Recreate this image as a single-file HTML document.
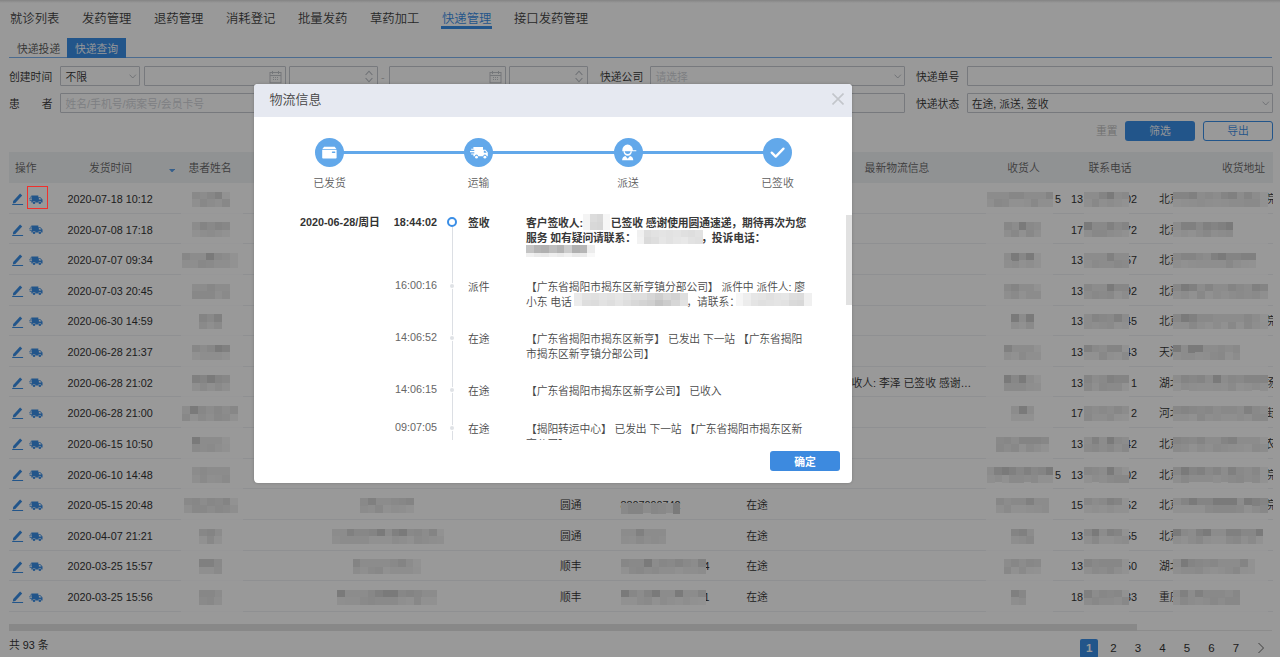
<!DOCTYPE html>
<html lang="zh-CN">
<head>
<meta charset="utf-8">
<title>快递管理</title>
<style>
*{box-sizing:border-box;margin:0;padding:0}
html,body{width:1280px;height:657px;overflow:hidden;background:#fff}
body{font-family:"Liberation Sans","Noto Sans CJK SC",sans-serif;font-size:10.8px;color:#333;position:relative;font-weight:350}
.a{position:absolute;white-space:nowrap}
.a i{position:absolute;display:block}
#page{position:absolute;left:0;top:0;width:1280px;height:657px;overflow:hidden;background:#fff}
.nav span{position:absolute;top:8.900px;font-size:12.35px;line-height:20px;color:#444;white-space:nowrap}
.nav span.on{color:#3a8ee6}
.inp{position:absolute;height:20px;padding-top:.8px;border:1px solid #c6cad0;border-radius:1px;background:#fff;font-size:10.8px;line-height:18px;padding-left:4.500px;color:#333;white-space:nowrap;overflow:hidden}
.inp.dis{background:#fff}
.ph{color:#d0d3d8}
.lbl{position:absolute;padding-top:.8px;font-size:10.8px;line-height:20px;color:#333;white-space:nowrap}
.th{position:absolute;top:153px;height:31px;line-height:31px;font-size:10.8px;color:#666;white-space:nowrap}
.row{position:absolute;left:9px;width:1264px;overflow:hidden;height:30.63px;border-bottom:1px solid #eff1f4}
.row span{position:absolute;top:.9px;line-height:31px;font-size:10.8px;color:#333;white-space:nowrap}
.row svg{position:absolute}
#mask{position:absolute;left:0;top:0;width:1280px;height:657px;background:rgba(0,0,0,.4)}
#dlg{position:absolute;left:255px;top:84px;width:597px;height:398px}
#dbg{position:absolute;left:-1.100px;top:-0.100px;width:597.900px;height:398.800px;background:#fff;border-radius:4px;overflow:hidden;box-shadow:0 0 3px rgba(0,0,0,.22)}
#dbg .hd{position:absolute;left:0;top:0;width:100%;height:32.900px;background:#e6e9f1}
.stp{position:absolute;width:29px;height:29px;border-radius:50%;background:#62a8ea;top:54px}
.stp svg{position:absolute;left:0;top:0}
.stl{position:absolute;top:92px;font-size:10.8px;line-height:14px;color:#5c5c5c;width:80px;text-align:center}
#sc{position:absolute;left:0;top:120px;width:597px;height:235.75px;overflow:hidden}
#sc span{position:absolute;font-size:10.8px;line-height:15px;color:#4a4a4a;white-space:nowrap}
#sc span.t{color:#666}
#sc span.b{font-weight:bold;color:#333}
#sc span.m{font-weight:bold;color:#383838}
#sc span.d{white-space:normal;width:283px;letter-spacing:-0.1px}
</style>
</head>
<body>
<div id="page">
<div class="nav">
<span style="left:10px">就诊列表</span>
<span style="left:82px">发药管理</span>
<span style="left:154px">退药管理</span>
<span style="left:226px">消耗登记</span>
<span style="left:298px">批量发药</span>
<span style="left:370px">草药加工</span>
<span class="on" style="left:442px">快递管理</span>
<span style="left:514px">接口发药管理</span>
<div class="a" style="left:441.300px;top:26.300px;width:50.500px;height:2.400px;background:#3a8ee6"></div>
</div>
<div class="a" style="left:0;top:0;width:1280px;height:3px;background:linear-gradient(#dcdcdc,#fff)"></div>
<div class="a" style="left:9px;top:57px;width:1263px;height:1px;background:#7db3ee"></div>
<div class="a" style="left:17px;top:39.800px;line-height:18px;color:#555">快递投递</div>
<div class="a" style="left:67px;top:38px;width:59px;height:20px;background:#3a8ee6;color:#fff;line-height:20px;padding-top:.8px;text-align:center">快递查询</div>
<div class="lbl" style="left:9px;top:66px">创建时间</div>
<div class="inp" style="left:60px;top:66px;width:80px">不限<svg class="a" style="right:2.500px;top:6.500px" width="7.500" height="5" viewBox="0 0 9 6"><path d="M0.7 0.8L4.5 4.8L8.3 0.8" fill="none" stroke="#b0b4ba" stroke-width="1"/></svg></div>
<div class="inp dis" style="left:144px;top:66px;width:142px"><svg class="a" style="right:3px;top:3.300px" width="13" height="13.500" viewBox="0 0 13 13.500"><rect x="1" y="2.5" width="11" height="10.300" fill="none" stroke="#c3c6cc"/><path d="M3.5 1v3M9.5 1v3M1 5.5h11M4 7.5h1M6 7.5h1M8 7.5h1M4 9.5h1M6 9.5h1M8 9.5h1" stroke="#c3c6cc" fill="none"/></svg></div>
<div class="inp dis" style="left:289px;top:66px;width:89px"><svg class="a" style="right:4px;top:3px" width="8" height="13" viewBox="0 0 8 13"><path d="M0.6 5L4 1.2L7.4 5M0.6 8L4 11.800L7.400 8" fill="none" stroke="#b9bdc3" stroke-width="1.100"/></svg></div>
<div class="lbl" style="left:381px;top:66px;color:#c4c4c4">-</div>
<div class="inp dis" style="left:389px;top:66px;width:117px"><svg class="a" style="right:3px;top:3.300px" width="13" height="13.500" viewBox="0 0 13 13.500"><rect x="1" y="2.5" width="11" height="10.300" fill="none" stroke="#c3c6cc"/><path d="M3.5 1v3M9.5 1v3M1 5.5h11M4 7.5h1M6 7.5h1M8 7.5h1M4 9.5h1M6 9.5h1M8 9.5h1" stroke="#c3c6cc" fill="none"/></svg></div>
<div class="inp dis" style="left:509px;top:66px;width:79px"><svg class="a" style="right:4px;top:3px" width="8" height="13" viewBox="0 0 8 13"><path d="M0.6 5L4 1.2L7.4 5M0.6 8L4 11.800L7.400 8" fill="none" stroke="#b9bdc3" stroke-width="1.100"/></svg></div>
<div class="lbl" style="left:600px;top:66px">快递公司</div>
<div class="inp" style="left:650px;top:66px;width:255px"><span class="ph">请选择</span><svg class="a" style="right:2.500px;top:6.500px" width="7.500" height="5" viewBox="0 0 9 6"><path d="M0.7 0.8L4.5 4.8L8.3 0.8" fill="none" stroke="#b0b4ba" stroke-width="1"/></svg></div>
<div class="lbl" style="left:916px;top:66px">快递单号</div>
<div class="inp" style="left:967px;top:66px;width:306px"></div>
<div class="lbl" style="left:9px;top:93px;width:44px;letter-spacing:22px">患者</div>
<div class="inp" style="left:60px;top:93px;width:480px"><span class="ph">姓名/手机号/病案号/会员卡号</span></div>
<div class="inp" style="left:650px;top:93px;width:255px"></div>
<div class="lbl" style="left:916px;top:93px">快递状态</div>
<div class="inp" style="left:967px;top:93px;width:306px;padding-left:3.700px">在途, 派送, 签收<svg class="a" style="right:2.500px;top:6.500px" width="7.500" height="5" viewBox="0 0 9 6"><path d="M0.7 0.8L4.5 4.8L8.3 0.8" fill="none" stroke="#b0b4ba" stroke-width="1"/></svg></div>
<div class="a" style="left:1096px;top:121px;line-height:20px;color:#bbb">重置</div>
<div class="a" style="left:1125px;top:121px;width:70px;height:20px;border-radius:3px;background:#3a8ee6;color:#fff;line-height:20px;text-align:center">筛选</div>
<div class="a" style="left:1203px;top:121px;width:70px;height:20px;border-radius:3px;border:1px solid #3a8ee6;color:#3a8ee6;line-height:18px;text-align:center">导出</div>
<div class="a" style="left:9px;top:152px;width:1264px;height:31px;background:#f1f3f6"></div>
<div class="th" style="left:15.0px">操作</div>
<div class="th" style="left:50.5px;width:120px;text-align:center">发货时间</div>
<svg class="a" style="left:168.800px;top:168.800px" width="6.200" height="3.600" viewBox="0 0 7 4"><path d="M0 0h7L3.500 4z" fill="#5a9fe8"/></svg>
<div class="th" style="left:150.0px;width:120px;text-align:center">患者姓名</div>
<div class="th" style="left:837.0px;width:120px;text-align:center">最新物流信息</div>
<div class="th" style="left:963.5px;width:120px;text-align:center">收货人</div>
<div class="th" style="left:1050.0px;width:120px;text-align:center">联系电话</div>
<div class="th" style="left:1183.5px;width:120px;text-align:center">收货地址</div>
<div class="row" style="top:183.00px">
<svg style="left:3px;top:10.0px" width="12" height="12.5" viewBox="0 0 12 12.500"><path d="M0.9 10.400L1.200 8L8.100 0.500L10.200 2.500L3.300 10z" fill="#3a8ee6"/><path d="M0.200 11.500h10.900" stroke="#3a8ee6" stroke-width="1"/></svg>
<svg style="left:20px;top:11.6px" width="14" height="9.6" viewBox="0 0 15 11" preserveAspectRatio="none"><path d="M2.5 0.5h7.5v2h2.2l2.3 2.6v3.4h-1.3a1.6 1.6 0 0 0-3.2 0h-3a1.6 1.6 0 0 0-3.2 0h-1.3v-1.5h-1.800v-1h2.500v-1h-3.200v-1h3.200v-1h-2.200v-1h1.500z" fill="#3a8ee6"/><circle cx="5.400" cy="8.800" r="1.400" fill="#3a8ee6"/><circle cx="11.600" cy="8.800" r="1.400" fill="#3a8ee6"/><path d="M10.600 3.300h1.300l1.500 1.800h-2.800z" fill="#fff"/></svg>
<span style="left:58.5px">2020-07-18 10:12</span>
<span style="left:1046px">5</span>
<span style="left:1062px">13</span>
<span style="left:1098px;width:30px;text-align:right">02</span>
<span style="left:1150px">北京</span>
<span style="left:1255.500px;width:9px;overflow:hidden">院</span>
</div>
<div class="row" style="top:213.63px">
<svg style="left:3px;top:10.0px" width="12" height="12.5" viewBox="0 0 12 12.500"><path d="M0.9 10.400L1.200 8L8.100 0.500L10.200 2.500L3.300 10z" fill="#3a8ee6"/><path d="M0.200 11.500h10.900" stroke="#3a8ee6" stroke-width="1"/></svg>
<svg style="left:20px;top:11.6px" width="14" height="9.6" viewBox="0 0 15 11" preserveAspectRatio="none"><path d="M2.5 0.5h7.5v2h2.2l2.3 2.6v3.4h-1.3a1.6 1.6 0 0 0-3.2 0h-3a1.6 1.6 0 0 0-3.2 0h-1.3v-1.5h-1.800v-1h2.500v-1h-3.200v-1h3.200v-1h-2.200v-1h1.500z" fill="#3a8ee6"/><circle cx="5.400" cy="8.800" r="1.400" fill="#3a8ee6"/><circle cx="11.600" cy="8.800" r="1.400" fill="#3a8ee6"/><path d="M10.600 3.300h1.300l1.500 1.800h-2.800z" fill="#fff"/></svg>
<span style="left:58.5px">2020-07-08 17:18</span>
<span style="left:1062px">17</span>
<span style="left:1098px;width:30px;text-align:right">72</span>
<span style="left:1150px">北京</span>
</div>
<div class="row" style="top:244.26px">
<svg style="left:3px;top:10.0px" width="12" height="12.5" viewBox="0 0 12 12.500"><path d="M0.9 10.400L1.200 8L8.100 0.500L10.200 2.500L3.300 10z" fill="#3a8ee6"/><path d="M0.200 11.500h10.900" stroke="#3a8ee6" stroke-width="1"/></svg>
<svg style="left:20px;top:11.6px" width="14" height="9.6" viewBox="0 0 15 11" preserveAspectRatio="none"><path d="M2.5 0.5h7.5v2h2.2l2.3 2.6v3.4h-1.3a1.6 1.6 0 0 0-3.2 0h-3a1.6 1.6 0 0 0-3.2 0h-1.3v-1.5h-1.800v-1h2.500v-1h-3.200v-1h3.200v-1h-2.200v-1h1.500z" fill="#3a8ee6"/><circle cx="5.400" cy="8.800" r="1.400" fill="#3a8ee6"/><circle cx="11.600" cy="8.800" r="1.400" fill="#3a8ee6"/><path d="M10.600 3.300h1.300l1.500 1.800h-2.800z" fill="#fff"/></svg>
<span style="left:58.5px">2020-07-07 09:34</span>
<span style="left:1062px">13</span>
<span style="left:1098px;width:30px;text-align:right">57</span>
<span style="left:1150px">北京</span>
</div>
<div class="row" style="top:274.89px">
<svg style="left:3px;top:10.0px" width="12" height="12.5" viewBox="0 0 12 12.500"><path d="M0.9 10.400L1.200 8L8.100 0.500L10.200 2.500L3.300 10z" fill="#3a8ee6"/><path d="M0.200 11.500h10.900" stroke="#3a8ee6" stroke-width="1"/></svg>
<svg style="left:20px;top:11.6px" width="14" height="9.6" viewBox="0 0 15 11" preserveAspectRatio="none"><path d="M2.5 0.5h7.5v2h2.2l2.3 2.6v3.4h-1.3a1.6 1.6 0 0 0-3.2 0h-3a1.6 1.6 0 0 0-3.2 0h-1.3v-1.5h-1.800v-1h2.500v-1h-3.200v-1h3.200v-1h-2.200v-1h1.500z" fill="#3a8ee6"/><circle cx="5.400" cy="8.800" r="1.400" fill="#3a8ee6"/><circle cx="11.600" cy="8.800" r="1.400" fill="#3a8ee6"/><path d="M10.600 3.300h1.300l1.500 1.800h-2.800z" fill="#fff"/></svg>
<span style="left:58.5px">2020-07-03 20:45</span>
<span style="left:1062px">13</span>
<span style="left:1098px;width:30px;text-align:right">92</span>
<span style="left:1150px">北京</span>
<span style="left:1255.500px;width:9px;overflow:hidden"></span>
</div>
<div class="row" style="top:305.52px">
<svg style="left:3px;top:10.0px" width="12" height="12.5" viewBox="0 0 12 12.500"><path d="M0.9 10.400L1.200 8L8.100 0.500L10.200 2.500L3.300 10z" fill="#3a8ee6"/><path d="M0.200 11.500h10.900" stroke="#3a8ee6" stroke-width="1"/></svg>
<svg style="left:20px;top:11.6px" width="14" height="9.6" viewBox="0 0 15 11" preserveAspectRatio="none"><path d="M2.5 0.5h7.5v2h2.2l2.3 2.6v3.4h-1.3a1.6 1.6 0 0 0-3.2 0h-3a1.6 1.6 0 0 0-3.2 0h-1.3v-1.5h-1.800v-1h2.500v-1h-3.200v-1h3.200v-1h-2.200v-1h1.500z" fill="#3a8ee6"/><circle cx="5.400" cy="8.800" r="1.400" fill="#3a8ee6"/><circle cx="11.600" cy="8.800" r="1.400" fill="#3a8ee6"/><path d="M10.600 3.300h1.300l1.500 1.800h-2.800z" fill="#fff"/></svg>
<span style="left:58.5px">2020-06-30 14:59</span>
<span style="left:1062px">13</span>
<span style="left:1098px;width:30px;text-align:right">45</span>
<span style="left:1150px">北京</span>
<span style="left:1255.500px;width:9px;overflow:hidden">院</span>
</div>
<div class="row" style="top:336.15px">
<svg style="left:3px;top:10.0px" width="12" height="12.5" viewBox="0 0 12 12.500"><path d="M0.9 10.400L1.200 8L8.100 0.500L10.200 2.500L3.300 10z" fill="#3a8ee6"/><path d="M0.200 11.500h10.900" stroke="#3a8ee6" stroke-width="1"/></svg>
<svg style="left:20px;top:11.6px" width="14" height="9.6" viewBox="0 0 15 11" preserveAspectRatio="none"><path d="M2.5 0.5h7.5v2h2.2l2.3 2.6v3.4h-1.3a1.6 1.6 0 0 0-3.2 0h-3a1.6 1.6 0 0 0-3.2 0h-1.3v-1.5h-1.800v-1h2.500v-1h-3.200v-1h3.200v-1h-2.200v-1h1.500z" fill="#3a8ee6"/><circle cx="5.400" cy="8.800" r="1.400" fill="#3a8ee6"/><circle cx="11.600" cy="8.800" r="1.400" fill="#3a8ee6"/><path d="M10.600 3.300h1.300l1.500 1.800h-2.800z" fill="#fff"/></svg>
<span style="left:58.5px">2020-06-28 21:37</span>
<span style="left:1062px">13</span>
<span style="left:1098px;width:30px;text-align:right">43</span>
<span style="left:1150px">天津</span>
</div>
<div class="row" style="top:366.78px">
<svg style="left:3px;top:10.0px" width="12" height="12.5" viewBox="0 0 12 12.500"><path d="M0.9 10.400L1.200 8L8.100 0.500L10.200 2.500L3.300 10z" fill="#3a8ee6"/><path d="M0.200 11.500h10.900" stroke="#3a8ee6" stroke-width="1"/></svg>
<svg style="left:20px;top:11.6px" width="14" height="9.6" viewBox="0 0 15 11" preserveAspectRatio="none"><path d="M2.5 0.5h7.5v2h2.2l2.3 2.6v3.4h-1.3a1.6 1.6 0 0 0-3.2 0h-3a1.6 1.6 0 0 0-3.2 0h-1.3v-1.5h-1.800v-1h2.500v-1h-3.200v-1h3.200v-1h-2.200v-1h1.500z" fill="#3a8ee6"/><circle cx="5.400" cy="8.800" r="1.400" fill="#3a8ee6"/><circle cx="11.600" cy="8.800" r="1.400" fill="#3a8ee6"/><path d="M10.600 3.300h1.300l1.500 1.800h-2.800z" fill="#fff"/></svg>
<span style="left:58.5px">2020-06-28 21:02</span>
<span style="left:810px">客户签收人: 李泽 已签收 感谢…</span>
<span style="left:1062px">13</span>
<span style="left:1098px;width:30px;text-align:right">1</span>
<span style="left:1150px">湖北</span>
<span style="left:1255.500px;width:9px;overflow:hidden">场</span>
</div>
<div class="row" style="top:397.41px">
<svg style="left:3px;top:10.0px" width="12" height="12.5" viewBox="0 0 12 12.500"><path d="M0.9 10.400L1.200 8L8.100 0.500L10.200 2.500L3.300 10z" fill="#3a8ee6"/><path d="M0.200 11.500h10.900" stroke="#3a8ee6" stroke-width="1"/></svg>
<svg style="left:20px;top:11.6px" width="14" height="9.6" viewBox="0 0 15 11" preserveAspectRatio="none"><path d="M2.5 0.5h7.5v2h2.2l2.3 2.6v3.4h-1.3a1.6 1.6 0 0 0-3.2 0h-3a1.6 1.6 0 0 0-3.2 0h-1.3v-1.5h-1.800v-1h2.500v-1h-3.200v-1h3.200v-1h-2.200v-1h1.500z" fill="#3a8ee6"/><circle cx="5.400" cy="8.800" r="1.400" fill="#3a8ee6"/><circle cx="11.600" cy="8.800" r="1.400" fill="#3a8ee6"/><path d="M10.600 3.300h1.300l1.500 1.800h-2.800z" fill="#fff"/></svg>
<span style="left:58.5px">2020-06-28 21:00</span>
<span style="left:1062px">17</span>
<span style="left:1098px;width:30px;text-align:right">2</span>
<span style="left:1150px">河北</span>
<span style="left:1255.500px;width:9px;overflow:hidden">街</span>
</div>
<div class="row" style="top:428.04px">
<svg style="left:3px;top:10.0px" width="12" height="12.5" viewBox="0 0 12 12.500"><path d="M0.9 10.400L1.200 8L8.100 0.500L10.200 2.500L3.300 10z" fill="#3a8ee6"/><path d="M0.200 11.500h10.900" stroke="#3a8ee6" stroke-width="1"/></svg>
<svg style="left:20px;top:11.6px" width="14" height="9.6" viewBox="0 0 15 11" preserveAspectRatio="none"><path d="M2.5 0.5h7.5v2h2.2l2.3 2.6v3.4h-1.3a1.6 1.6 0 0 0-3.2 0h-3a1.6 1.6 0 0 0-3.2 0h-1.3v-1.5h-1.800v-1h2.500v-1h-3.200v-1h3.200v-1h-2.200v-1h1.500z" fill="#3a8ee6"/><circle cx="5.400" cy="8.800" r="1.400" fill="#3a8ee6"/><circle cx="11.600" cy="8.800" r="1.400" fill="#3a8ee6"/><path d="M10.600 3.300h1.300l1.500 1.800h-2.800z" fill="#fff"/></svg>
<span style="left:58.5px">2020-06-15 10:50</span>
<span style="left:1062px">13</span>
<span style="left:1098px;width:30px;text-align:right">42</span>
<span style="left:1150px">北京</span>
<span style="left:1255.500px;width:9px;overflow:hidden">农</span>
</div>
<div class="row" style="top:458.67px">
<svg style="left:3px;top:10.0px" width="12" height="12.5" viewBox="0 0 12 12.500"><path d="M0.9 10.400L1.200 8L8.100 0.500L10.200 2.500L3.300 10z" fill="#3a8ee6"/><path d="M0.200 11.500h10.900" stroke="#3a8ee6" stroke-width="1"/></svg>
<svg style="left:20px;top:11.6px" width="14" height="9.6" viewBox="0 0 15 11" preserveAspectRatio="none"><path d="M2.5 0.5h7.5v2h2.2l2.3 2.6v3.4h-1.3a1.6 1.6 0 0 0-3.2 0h-3a1.6 1.6 0 0 0-3.2 0h-1.3v-1.5h-1.800v-1h2.500v-1h-3.200v-1h3.200v-1h-2.200v-1h1.500z" fill="#3a8ee6"/><circle cx="5.400" cy="8.800" r="1.400" fill="#3a8ee6"/><circle cx="11.600" cy="8.800" r="1.400" fill="#3a8ee6"/><path d="M10.600 3.300h1.300l1.500 1.800h-2.800z" fill="#fff"/></svg>
<span style="left:58.5px">2020-06-10 14:48</span>
<span style="left:1046px">5</span>
<span style="left:1062px">13</span>
<span style="left:1098px;width:30px;text-align:right">02</span>
<span style="left:1150px">北京</span>
<span style="left:1255.500px;width:9px;overflow:hidden">院</span>
</div>
<div class="row" style="top:489.30px">
<svg style="left:3px;top:10.0px" width="12" height="12.5" viewBox="0 0 12 12.500"><path d="M0.9 10.400L1.200 8L8.100 0.500L10.200 2.500L3.300 10z" fill="#3a8ee6"/><path d="M0.200 11.500h10.900" stroke="#3a8ee6" stroke-width="1"/></svg>
<svg style="left:20px;top:11.6px" width="14" height="9.6" viewBox="0 0 15 11" preserveAspectRatio="none"><path d="M2.5 0.5h7.5v2h2.2l2.3 2.6v3.4h-1.3a1.6 1.6 0 0 0-3.2 0h-3a1.6 1.6 0 0 0-3.2 0h-1.3v-1.5h-1.800v-1h2.500v-1h-3.200v-1h3.200v-1h-2.200v-1h1.500z" fill="#3a8ee6"/><circle cx="5.400" cy="8.800" r="1.400" fill="#3a8ee6"/><circle cx="11.600" cy="8.800" r="1.400" fill="#3a8ee6"/><path d="M10.600 3.300h1.300l1.500 1.800h-2.800z" fill="#fff"/></svg>
<span style="left:58.5px">2020-05-15 20:48</span>
<span style="left:551px">圆通</span>
<span style="left:737.300px">在途</span>
<span style="left:611.500px">8807090742</span>
<span style="left:1062px">15</span>
<span style="left:1098px;width:30px;text-align:right">52</span>
<span style="left:1150px">北京</span>
<span style="left:1255.500px;width:9px;overflow:hidden">院</span>
</div>
<div class="row" style="top:519.93px">
<svg style="left:3px;top:10.0px" width="12" height="12.5" viewBox="0 0 12 12.500"><path d="M0.9 10.400L1.200 8L8.100 0.500L10.200 2.500L3.300 10z" fill="#3a8ee6"/><path d="M0.200 11.500h10.900" stroke="#3a8ee6" stroke-width="1"/></svg>
<svg style="left:20px;top:11.6px" width="14" height="9.6" viewBox="0 0 15 11" preserveAspectRatio="none"><path d="M2.5 0.5h7.5v2h2.2l2.3 2.6v3.4h-1.3a1.6 1.6 0 0 0-3.2 0h-3a1.6 1.6 0 0 0-3.2 0h-1.3v-1.5h-1.800v-1h2.500v-1h-3.200v-1h3.200v-1h-2.200v-1h1.500z" fill="#3a8ee6"/><circle cx="5.400" cy="8.800" r="1.400" fill="#3a8ee6"/><circle cx="11.600" cy="8.800" r="1.400" fill="#3a8ee6"/><path d="M10.600 3.300h1.300l1.500 1.800h-2.800z" fill="#fff"/></svg>
<span style="left:58.5px">2020-04-07 21:21</span>
<span style="left:551px">圆通</span>
<span style="left:737.300px">在途</span>
<span style="left:1062px">13</span>
<span style="left:1098px;width:30px;text-align:right">55</span>
<span style="left:1150px">北京</span>
</div>
<div class="row" style="top:550.56px">
<svg style="left:3px;top:10.0px" width="12" height="12.5" viewBox="0 0 12 12.500"><path d="M0.9 10.400L1.200 8L8.100 0.500L10.200 2.500L3.300 10z" fill="#3a8ee6"/><path d="M0.200 11.500h10.900" stroke="#3a8ee6" stroke-width="1"/></svg>
<svg style="left:20px;top:11.6px" width="14" height="9.6" viewBox="0 0 15 11" preserveAspectRatio="none"><path d="M2.5 0.5h7.5v2h2.2l2.3 2.6v3.4h-1.3a1.6 1.6 0 0 0-3.2 0h-3a1.6 1.6 0 0 0-3.2 0h-1.3v-1.5h-1.800v-1h2.500v-1h-3.200v-1h3.200v-1h-2.200v-1h1.500z" fill="#3a8ee6"/><circle cx="5.400" cy="8.800" r="1.400" fill="#3a8ee6"/><circle cx="11.600" cy="8.800" r="1.400" fill="#3a8ee6"/><path d="M10.600 3.300h1.300l1.500 1.800h-2.800z" fill="#fff"/></svg>
<span style="left:58.5px">2020-03-25 15:57</span>
<span style="left:551px">顺丰</span>
<span style="left:737.300px">在途</span>
<span style="left:694.500px">4</span>
<span style="left:1062px">13</span>
<span style="left:1098px;width:30px;text-align:right">50</span>
<span style="left:1150px">湖北</span>
</div>
<div class="row" style="top:581.19px">
<svg style="left:3px;top:10.0px" width="12" height="12.5" viewBox="0 0 12 12.500"><path d="M0.9 10.400L1.200 8L8.100 0.500L10.200 2.500L3.300 10z" fill="#3a8ee6"/><path d="M0.200 11.500h10.900" stroke="#3a8ee6" stroke-width="1"/></svg>
<svg style="left:20px;top:11.6px" width="14" height="9.6" viewBox="0 0 15 11" preserveAspectRatio="none"><path d="M2.5 0.5h7.5v2h2.2l2.3 2.6v3.4h-1.3a1.6 1.6 0 0 0-3.2 0h-3a1.6 1.6 0 0 0-3.2 0h-1.3v-1.5h-1.800v-1h2.500v-1h-3.200v-1h3.200v-1h-2.200v-1h1.500z" fill="#3a8ee6"/><circle cx="5.400" cy="8.800" r="1.400" fill="#3a8ee6"/><circle cx="11.600" cy="8.800" r="1.400" fill="#3a8ee6"/><path d="M10.600 3.300h1.300l1.500 1.800h-2.800z" fill="#fff"/></svg>
<span style="left:58.5px">2020-03-25 15:56</span>
<span style="left:551px">顺丰</span>
<span style="left:737.300px">在途</span>
<span style="left:694.500px">1</span>
<span style="left:1062px">18</span>
<span style="left:1098px;width:30px;text-align:right">33</span>
<span style="left:1150px">重庆</span>
</div>
<div class="a" style="left:9px;top:624px;width:1263px;height:7px;border-bottom:1px solid #e9e9e9"></div>
<div class="a" style="left:9px;top:623.800px;width:1128px;height:6.800px;background:#e3e3e3"></div>
<div class="a" style="left:9px;top:636px;line-height:18px;color:#333">共 93 条</div>
<div class="a" style="left:1080.200px;top:638.800px;width:18px;height:19px;border-radius:2px;background:#3a8ee6;color:#fff;line-height:18px;text-align:center;font-weight:bold;font-size:11.500px">1</div>
<div class="a" style="left:1104.5px;top:638.800px;width:18px;line-height:18px;text-align:center;color:#333;font-size:11.500px">2</div>
<div class="a" style="left:1129.0px;top:638.800px;width:18px;line-height:18px;text-align:center;color:#333;font-size:11.500px">3</div>
<div class="a" style="left:1153.5px;top:638.800px;width:18px;line-height:18px;text-align:center;color:#333;font-size:11.500px">4</div>
<div class="a" style="left:1178.0px;top:638.800px;width:18px;line-height:18px;text-align:center;color:#333;font-size:11.500px">5</div>
<div class="a" style="left:1202.5px;top:638.800px;width:18px;line-height:18px;text-align:center;color:#333;font-size:11.500px">6</div>
<div class="a" style="left:1227.0px;top:638.800px;width:18px;line-height:18px;text-align:center;color:#333;font-size:11.500px">7</div>
<svg class="a" style="left:1257px;top:642px" width="8" height="12" viewBox="0 0 8 12"><path d="M1.5 1L6.5 6L1.5 11" fill="none" stroke="#666" stroke-width="1"/></svg>
</div>
<div id="mask"></div>
<div id="cz">
<div class="a" style="left:181px;top:184px;width:62px;height:428px;background:rgba(153,153,153,.75)"></div>
<div class="a" style="left:986px;top:184px;width:67px;height:428px;background:rgba(153,153,153,.75)"></div>
<div class="a" style="left:1084px;top:184px;width:45px;height:428px;background:rgba(153,153,153,.75)"></div>
<div class="a" style="left:1173px;top:184px;width:95px;height:428px;background:rgba(153,153,153,.75)"></div>
<div class="a" style="left:192.0px;top:191.6px;width:38.0px;height:15.0px;background:rgb(140,140,140)"><i style="left:0.0px;top:0.0px;width:7.9px;height:7.8px;background:rgb(137,137,137)"></i><i style="left:15.2px;top:0.0px;width:7.9px;height:7.8px;background:rgb(135,135,135)"></i><i style="left:22.8px;top:0.0px;width:7.9px;height:7.8px;background:rgb(128,128,128)"></i><i style="left:30.4px;top:0.0px;width:7.9px;height:7.8px;background:rgb(146,146,146)"></i><i style="left:0.0px;top:7.5px;width:7.9px;height:7.8px;background:rgb(143,143,143)"></i><i style="left:7.6px;top:7.5px;width:7.9px;height:7.8px;background:rgb(136,136,136)"></i><i style="left:22.8px;top:7.5px;width:7.9px;height:7.8px;background:rgb(143,143,143)"></i><i style="left:30.4px;top:7.5px;width:7.9px;height:7.8px;background:rgb(136,136,136)"></i></div>
<div class="a" style="left:987.0px;top:191.6px;width:66.0px;height:15.0px;background:rgb(140,140,140)"><i style="left:22.0px;top:0.0px;width:7.6px;height:7.8px;background:rgb(135,135,135)"></i><i style="left:29.3px;top:0.0px;width:7.6px;height:7.8px;background:rgb(135,135,135)"></i><i style="left:58.7px;top:0.0px;width:7.6px;height:7.8px;background:rgb(132,132,132)"></i><i style="left:0.0px;top:7.5px;width:7.6px;height:7.8px;background:rgb(143,143,143)"></i><i style="left:7.3px;top:7.5px;width:7.6px;height:7.8px;background:rgb(136,136,136)"></i><i style="left:14.7px;top:7.5px;width:7.6px;height:7.8px;background:rgb(138,138,138)"></i><i style="left:22.0px;top:7.5px;width:7.6px;height:7.8px;background:rgb(145,145,145)"></i><i style="left:29.3px;top:7.5px;width:7.6px;height:7.8px;background:rgb(145,145,145)"></i><i style="left:36.7px;top:7.5px;width:7.6px;height:7.8px;background:rgb(143,143,143)"></i><i style="left:44.0px;top:7.5px;width:7.6px;height:7.8px;background:rgb(136,136,136)"></i><i style="left:51.3px;top:7.5px;width:7.6px;height:7.8px;background:rgb(143,143,143)"></i><i style="left:58.7px;top:7.5px;width:7.6px;height:7.8px;background:rgb(143,143,143)"></i></div>
<div class="a" style="left:1084.0px;top:191.6px;width:45.0px;height:15.0px;background:rgb(140,140,140)"><i style="left:15.0px;top:0.0px;width:7.8px;height:7.8px;background:rgb(132,132,132)"></i><i style="left:22.5px;top:0.0px;width:7.8px;height:7.8px;background:rgb(122,122,122)"></i><i style="left:37.5px;top:0.0px;width:7.8px;height:7.8px;background:rgb(137,137,137)"></i><i style="left:0.0px;top:7.5px;width:7.8px;height:7.8px;background:rgb(143,143,143)"></i><i style="left:7.5px;top:7.5px;width:7.8px;height:7.8px;background:rgb(136,136,136)"></i><i style="left:15.0px;top:7.5px;width:7.8px;height:7.8px;background:rgb(143,143,143)"></i><i style="left:30.0px;top:7.5px;width:7.8px;height:7.8px;background:rgb(143,143,143)"></i><i style="left:37.5px;top:7.5px;width:7.8px;height:7.8px;background:rgb(146,146,146)"></i></div>
<div class="a" style="left:1173.0px;top:191.6px;width:95.0px;height:15.0px;background:rgb(140,140,140)"><i style="left:0.0px;top:0.0px;width:8.2px;height:7.8px;background:rgb(132,132,132)"></i><i style="left:7.9px;top:0.0px;width:8.2px;height:7.8px;background:rgb(132,132,132)"></i><i style="left:15.8px;top:0.0px;width:8.2px;height:7.8px;background:rgb(128,128,128)"></i><i style="left:31.7px;top:0.0px;width:8.2px;height:7.8px;background:rgb(137,137,137)"></i><i style="left:47.5px;top:0.0px;width:8.2px;height:7.8px;background:rgb(132,132,132)"></i><i style="left:55.4px;top:0.0px;width:8.2px;height:7.8px;background:rgb(128,128,128)"></i><i style="left:71.2px;top:0.0px;width:8.2px;height:7.8px;background:rgb(132,132,132)"></i><i style="left:87.1px;top:0.0px;width:8.2px;height:7.8px;background:rgb(146,146,146)"></i><i style="left:0.0px;top:7.5px;width:8.2px;height:7.8px;background:rgb(145,145,145)"></i><i style="left:7.9px;top:7.5px;width:8.2px;height:7.8px;background:rgb(143,143,143)"></i><i style="left:15.8px;top:7.5px;width:8.2px;height:7.8px;background:rgb(142,142,142)"></i><i style="left:31.7px;top:7.5px;width:8.2px;height:7.8px;background:rgb(142,142,142)"></i><i style="left:39.6px;top:7.5px;width:8.2px;height:7.8px;background:rgb(143,143,143)"></i><i style="left:47.5px;top:7.5px;width:8.2px;height:7.8px;background:rgb(142,142,142)"></i><i style="left:71.2px;top:7.5px;width:8.2px;height:7.8px;background:rgb(138,138,138)"></i><i style="left:79.2px;top:7.5px;width:8.2px;height:7.8px;background:rgb(138,138,138)"></i><i style="left:87.1px;top:7.5px;width:8.2px;height:7.8px;background:rgb(145,145,145)"></i></div>
<div class="a" style="left:192.0px;top:222.2px;width:38.0px;height:15.0px;background:rgb(140,140,140)"><i style="left:7.6px;top:0.0px;width:7.9px;height:7.8px;background:rgb(132,132,132)"></i><i style="left:15.2px;top:0.0px;width:7.9px;height:7.8px;background:rgb(137,137,137)"></i><i style="left:22.8px;top:0.0px;width:7.9px;height:7.8px;background:rgb(132,132,132)"></i><i style="left:30.4px;top:0.0px;width:7.9px;height:7.8px;background:rgb(135,135,135)"></i><i style="left:0.0px;top:7.5px;width:7.9px;height:7.8px;background:rgb(145,145,145)"></i><i style="left:7.6px;top:7.5px;width:7.9px;height:7.8px;background:rgb(142,142,142)"></i><i style="left:22.8px;top:7.5px;width:7.9px;height:7.8px;background:rgb(143,143,143)"></i><i style="left:30.4px;top:7.5px;width:7.9px;height:7.8px;background:rgb(146,146,146)"></i></div>
<div class="a" style="left:1004.0px;top:222.2px;width:37.0px;height:15.0px;background:rgb(140,140,140)"><i style="left:0.0px;top:0.0px;width:7.7px;height:7.8px;background:rgb(135,135,135)"></i><i style="left:14.8px;top:0.0px;width:7.7px;height:7.8px;background:rgb(122,122,122)"></i><i style="left:22.2px;top:0.0px;width:7.7px;height:7.8px;background:rgb(137,137,137)"></i><i style="left:0.0px;top:7.5px;width:7.7px;height:7.8px;background:rgb(142,142,142)"></i><i style="left:7.4px;top:7.5px;width:7.7px;height:7.8px;background:rgb(136,136,136)"></i><i style="left:14.8px;top:7.5px;width:7.7px;height:7.8px;background:rgb(145,145,145)"></i><i style="left:22.2px;top:7.5px;width:7.7px;height:7.8px;background:rgb(136,136,136)"></i><i style="left:29.6px;top:7.5px;width:7.7px;height:7.8px;background:rgb(143,143,143)"></i></div>
<div class="a" style="left:1084.0px;top:222.2px;width:45.0px;height:15.0px;background:rgb(140,140,140)"><i style="left:0.0px;top:0.0px;width:7.8px;height:7.8px;background:rgb(122,122,122)"></i><i style="left:7.5px;top:0.0px;width:7.8px;height:7.8px;background:rgb(137,137,137)"></i><i style="left:15.0px;top:0.0px;width:7.8px;height:7.8px;background:rgb(137,137,137)"></i><i style="left:22.5px;top:0.0px;width:7.8px;height:7.8px;background:rgb(128,128,128)"></i><i style="left:30.0px;top:0.0px;width:7.8px;height:7.8px;background:rgb(137,137,137)"></i><i style="left:37.5px;top:0.0px;width:7.8px;height:7.8px;background:rgb(132,132,132)"></i><i style="left:0.0px;top:7.5px;width:7.8px;height:7.8px;background:rgb(142,142,142)"></i><i style="left:7.5px;top:7.5px;width:7.8px;height:7.8px;background:rgb(136,136,136)"></i><i style="left:15.0px;top:7.5px;width:7.8px;height:7.8px;background:rgb(136,136,136)"></i><i style="left:30.0px;top:7.5px;width:7.8px;height:7.8px;background:rgb(142,142,142)"></i><i style="left:37.5px;top:7.5px;width:7.8px;height:7.8px;background:rgb(145,145,145)"></i></div>
<div class="a" style="left:1173.0px;top:222.2px;width:60.0px;height:15.0px;background:rgb(140,140,140)"><i style="left:7.5px;top:0.0px;width:7.8px;height:7.8px;background:rgb(128,128,128)"></i><i style="left:15.0px;top:0.0px;width:7.8px;height:7.8px;background:rgb(128,128,128)"></i><i style="left:22.5px;top:0.0px;width:7.8px;height:7.8px;background:rgb(137,137,137)"></i><i style="left:30.0px;top:0.0px;width:7.8px;height:7.8px;background:rgb(128,128,128)"></i><i style="left:37.5px;top:0.0px;width:7.8px;height:7.8px;background:rgb(132,132,132)"></i><i style="left:45.0px;top:0.0px;width:7.8px;height:7.8px;background:rgb(128,128,128)"></i><i style="left:52.5px;top:0.0px;width:7.8px;height:7.8px;background:rgb(122,122,122)"></i><i style="left:0.0px;top:7.5px;width:7.8px;height:7.8px;background:rgb(145,145,145)"></i><i style="left:7.5px;top:7.5px;width:7.8px;height:7.8px;background:rgb(142,142,142)"></i><i style="left:15.0px;top:7.5px;width:7.8px;height:7.8px;background:rgb(145,145,145)"></i><i style="left:30.0px;top:7.5px;width:7.8px;height:7.8px;background:rgb(136,136,136)"></i><i style="left:37.5px;top:7.5px;width:7.8px;height:7.8px;background:rgb(142,142,142)"></i><i style="left:52.5px;top:7.5px;width:7.8px;height:7.8px;background:rgb(138,138,138)"></i></div>
<div class="a" style="left:182.0px;top:252.9px;width:56.0px;height:15.0px;background:rgb(140,140,140)"><i style="left:0.0px;top:0.0px;width:8.3px;height:7.8px;background:rgb(135,135,135)"></i><i style="left:24.0px;top:0.0px;width:8.3px;height:7.8px;background:rgb(122,122,122)"></i><i style="left:32.0px;top:0.0px;width:8.3px;height:7.8px;background:rgb(137,137,137)"></i><i style="left:48.0px;top:0.0px;width:8.3px;height:7.8px;background:rgb(146,146,146)"></i><i style="left:0.0px;top:7.5px;width:8.3px;height:7.8px;background:rgb(142,142,142)"></i><i style="left:8.0px;top:7.5px;width:8.3px;height:7.8px;background:rgb(142,142,142)"></i><i style="left:16.0px;top:7.5px;width:8.3px;height:7.8px;background:rgb(136,136,136)"></i><i style="left:24.0px;top:7.5px;width:8.3px;height:7.8px;background:rgb(138,138,138)"></i><i style="left:32.0px;top:7.5px;width:8.3px;height:7.8px;background:rgb(142,142,142)"></i><i style="left:40.0px;top:7.5px;width:8.3px;height:7.8px;background:rgb(142,142,142)"></i><i style="left:48.0px;top:7.5px;width:8.3px;height:7.8px;background:rgb(146,146,146)"></i></div>
<div class="a" style="left:1004.0px;top:252.9px;width:37.0px;height:15.0px;background:rgb(140,140,140)"><i style="left:7.4px;top:0.0px;width:7.7px;height:7.8px;background:rgb(122,122,122)"></i><i style="left:14.8px;top:0.0px;width:7.7px;height:7.8px;background:rgb(135,135,135)"></i><i style="left:22.2px;top:0.0px;width:7.7px;height:7.8px;background:rgb(122,122,122)"></i><i style="left:29.6px;top:0.0px;width:7.7px;height:7.8px;background:rgb(146,146,146)"></i><i style="left:0.0px;top:7.5px;width:7.7px;height:7.8px;background:rgb(142,142,142)"></i><i style="left:14.8px;top:7.5px;width:7.7px;height:7.8px;background:rgb(145,145,145)"></i><i style="left:22.2px;top:7.5px;width:7.7px;height:7.8px;background:rgb(142,142,142)"></i><i style="left:29.6px;top:7.5px;width:7.7px;height:7.8px;background:rgb(146,146,146)"></i></div>
<div class="a" style="left:1084.0px;top:252.9px;width:45.0px;height:15.0px;background:rgb(140,140,140)"><i style="left:22.5px;top:0.0px;width:7.8px;height:7.8px;background:rgb(128,128,128)"></i><i style="left:0.0px;top:7.5px;width:7.8px;height:7.8px;background:rgb(143,143,143)"></i><i style="left:7.5px;top:7.5px;width:7.8px;height:7.8px;background:rgb(138,138,138)"></i><i style="left:30.0px;top:7.5px;width:7.8px;height:7.8px;background:rgb(136,136,136)"></i><i style="left:37.5px;top:7.5px;width:7.8px;height:7.8px;background:rgb(138,138,138)"></i></div>
<div class="a" style="left:1173.0px;top:252.9px;width:83.0px;height:15.0px;background:rgb(140,140,140)"><i style="left:0.0px;top:0.0px;width:7.8px;height:7.8px;background:rgb(137,137,137)"></i><i style="left:7.5px;top:0.0px;width:7.8px;height:7.8px;background:rgb(132,132,132)"></i><i style="left:15.1px;top:0.0px;width:7.8px;height:7.8px;background:rgb(132,132,132)"></i><i style="left:22.6px;top:0.0px;width:7.8px;height:7.8px;background:rgb(137,137,137)"></i><i style="left:37.7px;top:0.0px;width:7.8px;height:7.8px;background:rgb(128,128,128)"></i><i style="left:45.3px;top:0.0px;width:7.8px;height:7.8px;background:rgb(122,122,122)"></i><i style="left:52.8px;top:0.0px;width:7.8px;height:7.8px;background:rgb(132,132,132)"></i><i style="left:60.4px;top:0.0px;width:7.8px;height:7.8px;background:rgb(132,132,132)"></i><i style="left:67.9px;top:0.0px;width:7.8px;height:7.8px;background:rgb(128,128,128)"></i><i style="left:75.5px;top:0.0px;width:7.8px;height:7.8px;background:rgb(128,128,128)"></i><i style="left:0.0px;top:7.5px;width:7.8px;height:7.8px;background:rgb(142,142,142)"></i><i style="left:7.5px;top:7.5px;width:7.8px;height:7.8px;background:rgb(145,145,145)"></i><i style="left:15.1px;top:7.5px;width:7.8px;height:7.8px;background:rgb(143,143,143)"></i><i style="left:22.6px;top:7.5px;width:7.8px;height:7.8px;background:rgb(142,142,142)"></i><i style="left:30.2px;top:7.5px;width:7.8px;height:7.8px;background:rgb(142,142,142)"></i><i style="left:37.7px;top:7.5px;width:7.8px;height:7.8px;background:rgb(142,142,142)"></i><i style="left:45.3px;top:7.5px;width:7.8px;height:7.8px;background:rgb(142,142,142)"></i><i style="left:52.8px;top:7.5px;width:7.8px;height:7.8px;background:rgb(136,136,136)"></i><i style="left:60.4px;top:7.5px;width:7.8px;height:7.8px;background:rgb(142,142,142)"></i><i style="left:67.9px;top:7.5px;width:7.8px;height:7.8px;background:rgb(145,145,145)"></i><i style="left:75.5px;top:7.5px;width:7.8px;height:7.8px;background:rgb(146,146,146)"></i></div>
<div class="a" style="left:192.0px;top:283.5px;width:38.0px;height:15.0px;background:rgb(140,140,140)"><i style="left:15.2px;top:0.0px;width:7.9px;height:7.8px;background:rgb(135,135,135)"></i><i style="left:0.0px;top:7.5px;width:7.9px;height:7.8px;background:rgb(136,136,136)"></i><i style="left:7.6px;top:7.5px;width:7.9px;height:7.8px;background:rgb(136,136,136)"></i><i style="left:15.2px;top:7.5px;width:7.9px;height:7.8px;background:rgb(136,136,136)"></i><i style="left:22.8px;top:7.5px;width:7.9px;height:7.8px;background:rgb(143,143,143)"></i><i style="left:30.4px;top:7.5px;width:7.9px;height:7.8px;background:rgb(138,138,138)"></i></div>
<div class="a" style="left:1004.0px;top:283.5px;width:37.0px;height:15.0px;background:rgb(140,140,140)"><i style="left:0.0px;top:0.0px;width:7.7px;height:7.8px;background:rgb(137,137,137)"></i><i style="left:7.4px;top:0.0px;width:7.7px;height:7.8px;background:rgb(132,132,132)"></i><i style="left:29.6px;top:0.0px;width:7.7px;height:7.8px;background:rgb(146,146,146)"></i><i style="left:0.0px;top:7.5px;width:7.7px;height:7.8px;background:rgb(142,142,142)"></i><i style="left:7.4px;top:7.5px;width:7.7px;height:7.8px;background:rgb(138,138,138)"></i><i style="left:14.8px;top:7.5px;width:7.7px;height:7.8px;background:rgb(145,145,145)"></i></div>
<div class="a" style="left:1084.0px;top:283.5px;width:45.0px;height:15.0px;background:rgb(140,140,140)"><i style="left:0.0px;top:0.0px;width:7.8px;height:7.8px;background:rgb(135,135,135)"></i><i style="left:22.5px;top:0.0px;width:7.8px;height:7.8px;background:rgb(122,122,122)"></i><i style="left:30.0px;top:0.0px;width:7.8px;height:7.8px;background:rgb(135,135,135)"></i><i style="left:37.5px;top:0.0px;width:7.8px;height:7.8px;background:rgb(135,135,135)"></i><i style="left:7.5px;top:7.5px;width:7.8px;height:7.8px;background:rgb(136,136,136)"></i><i style="left:15.0px;top:7.5px;width:7.8px;height:7.8px;background:rgb(138,138,138)"></i><i style="left:22.5px;top:7.5px;width:7.8px;height:7.8px;background:rgb(136,136,136)"></i><i style="left:30.0px;top:7.5px;width:7.8px;height:7.8px;background:rgb(145,145,145)"></i></div>
<div class="a" style="left:1173.0px;top:283.5px;width:95.0px;height:15.0px;background:rgb(140,140,140)"><i style="left:0.0px;top:0.0px;width:8.2px;height:7.8px;background:rgb(135,135,135)"></i><i style="left:7.9px;top:0.0px;width:8.2px;height:7.8px;background:rgb(122,122,122)"></i><i style="left:15.8px;top:0.0px;width:8.2px;height:7.8px;background:rgb(128,128,128)"></i><i style="left:31.7px;top:0.0px;width:8.2px;height:7.8px;background:rgb(132,132,132)"></i><i style="left:55.4px;top:0.0px;width:8.2px;height:7.8px;background:rgb(132,132,132)"></i><i style="left:63.3px;top:0.0px;width:8.2px;height:7.8px;background:rgb(137,137,137)"></i><i style="left:79.2px;top:0.0px;width:8.2px;height:7.8px;background:rgb(128,128,128)"></i><i style="left:87.1px;top:0.0px;width:8.2px;height:7.8px;background:rgb(132,132,132)"></i><i style="left:0.0px;top:7.5px;width:8.2px;height:7.8px;background:rgb(143,143,143)"></i><i style="left:15.8px;top:7.5px;width:8.2px;height:7.8px;background:rgb(145,145,145)"></i><i style="left:23.8px;top:7.5px;width:8.2px;height:7.8px;background:rgb(136,136,136)"></i><i style="left:31.7px;top:7.5px;width:8.2px;height:7.8px;background:rgb(145,145,145)"></i><i style="left:47.5px;top:7.5px;width:8.2px;height:7.8px;background:rgb(143,143,143)"></i><i style="left:63.3px;top:7.5px;width:8.2px;height:7.8px;background:rgb(138,138,138)"></i><i style="left:79.2px;top:7.5px;width:8.2px;height:7.8px;background:rgb(138,138,138)"></i><i style="left:87.1px;top:7.5px;width:8.2px;height:7.8px;background:rgb(143,143,143)"></i></div>
<div class="a" style="left:199.0px;top:314.1px;width:23.0px;height:15.0px;background:rgb(140,140,140)"><i style="left:0.0px;top:0.0px;width:8.0px;height:7.8px;background:rgb(132,132,132)"></i><i style="left:7.7px;top:0.0px;width:8.0px;height:7.8px;background:rgb(137,137,137)"></i><i style="left:15.3px;top:0.0px;width:8.0px;height:7.8px;background:rgb(128,128,128)"></i><i style="left:0.0px;top:7.5px;width:8.0px;height:7.8px;background:rgb(138,138,138)"></i><i style="left:7.7px;top:7.5px;width:8.0px;height:7.8px;background:rgb(143,143,143)"></i><i style="left:15.3px;top:7.5px;width:8.0px;height:7.8px;background:rgb(138,138,138)"></i></div>
<div class="a" style="left:1011.0px;top:314.1px;width:23.0px;height:15.0px;background:rgb(140,140,140)"><i style="left:0.0px;top:0.0px;width:8.0px;height:7.8px;background:rgb(122,122,122)"></i><i style="left:15.3px;top:0.0px;width:8.0px;height:7.8px;background:rgb(122,122,122)"></i><i style="left:0.0px;top:7.5px;width:8.0px;height:7.8px;background:rgb(142,142,142)"></i><i style="left:7.7px;top:7.5px;width:8.0px;height:7.8px;background:rgb(145,145,145)"></i><i style="left:15.3px;top:7.5px;width:8.0px;height:7.8px;background:rgb(138,138,138)"></i></div>
<div class="a" style="left:1084.0px;top:314.1px;width:45.0px;height:15.0px;background:rgb(140,140,140)"><i style="left:7.5px;top:0.0px;width:7.8px;height:7.8px;background:rgb(132,132,132)"></i><i style="left:15.0px;top:0.0px;width:7.8px;height:7.8px;background:rgb(135,135,135)"></i><i style="left:22.5px;top:0.0px;width:7.8px;height:7.8px;background:rgb(137,137,137)"></i><i style="left:30.0px;top:0.0px;width:7.8px;height:7.8px;background:rgb(128,128,128)"></i><i style="left:7.5px;top:7.5px;width:7.8px;height:7.8px;background:rgb(142,142,142)"></i><i style="left:22.5px;top:7.5px;width:7.8px;height:7.8px;background:rgb(138,138,138)"></i><i style="left:30.0px;top:7.5px;width:7.8px;height:7.8px;background:rgb(145,145,145)"></i><i style="left:37.5px;top:7.5px;width:7.8px;height:7.8px;background:rgb(143,143,143)"></i></div>
<div class="a" style="left:1173.0px;top:314.1px;width:95.0px;height:15.0px;background:rgb(140,140,140)"><i style="left:0.0px;top:0.0px;width:8.2px;height:7.8px;background:rgb(135,135,135)"></i><i style="left:7.9px;top:0.0px;width:8.2px;height:7.8px;background:rgb(122,122,122)"></i><i style="left:15.8px;top:0.0px;width:8.2px;height:7.8px;background:rgb(128,128,128)"></i><i style="left:23.8px;top:0.0px;width:8.2px;height:7.8px;background:rgb(137,137,137)"></i><i style="left:31.7px;top:0.0px;width:8.2px;height:7.8px;background:rgb(137,137,137)"></i><i style="left:71.2px;top:0.0px;width:8.2px;height:7.8px;background:rgb(135,135,135)"></i><i style="left:87.1px;top:0.0px;width:8.2px;height:7.8px;background:rgb(146,146,146)"></i><i style="left:0.0px;top:7.5px;width:8.2px;height:7.8px;background:rgb(143,143,143)"></i><i style="left:7.9px;top:7.5px;width:8.2px;height:7.8px;background:rgb(143,143,143)"></i><i style="left:15.8px;top:7.5px;width:8.2px;height:7.8px;background:rgb(136,136,136)"></i><i style="left:23.8px;top:7.5px;width:8.2px;height:7.8px;background:rgb(142,142,142)"></i><i style="left:31.7px;top:7.5px;width:8.2px;height:7.8px;background:rgb(145,145,145)"></i><i style="left:47.5px;top:7.5px;width:8.2px;height:7.8px;background:rgb(145,145,145)"></i><i style="left:55.4px;top:7.5px;width:8.2px;height:7.8px;background:rgb(136,136,136)"></i><i style="left:63.3px;top:7.5px;width:8.2px;height:7.8px;background:rgb(145,145,145)"></i><i style="left:71.2px;top:7.5px;width:8.2px;height:7.8px;background:rgb(136,136,136)"></i><i style="left:79.2px;top:7.5px;width:8.2px;height:7.8px;background:rgb(142,142,142)"></i><i style="left:87.1px;top:7.5px;width:8.2px;height:7.8px;background:rgb(145,145,145)"></i></div>
<div class="a" style="left:192.0px;top:344.8px;width:38.0px;height:15.0px;background:rgb(140,140,140)"><i style="left:0.0px;top:0.0px;width:7.9px;height:7.8px;background:rgb(135,135,135)"></i><i style="left:15.2px;top:0.0px;width:7.9px;height:7.8px;background:rgb(135,135,135)"></i><i style="left:22.8px;top:0.0px;width:7.9px;height:7.8px;background:rgb(122,122,122)"></i><i style="left:30.4px;top:0.0px;width:7.9px;height:7.8px;background:rgb(128,128,128)"></i><i style="left:0.0px;top:7.5px;width:7.9px;height:7.8px;background:rgb(145,145,145)"></i><i style="left:7.6px;top:7.5px;width:7.9px;height:7.8px;background:rgb(142,142,142)"></i><i style="left:15.2px;top:7.5px;width:7.9px;height:7.8px;background:rgb(142,142,142)"></i><i style="left:22.8px;top:7.5px;width:7.9px;height:7.8px;background:rgb(142,142,142)"></i><i style="left:30.4px;top:7.5px;width:7.9px;height:7.8px;background:rgb(145,145,145)"></i></div>
<div class="a" style="left:1004.0px;top:344.8px;width:37.0px;height:15.0px;background:rgb(140,140,140)"><i style="left:0.0px;top:0.0px;width:7.7px;height:7.8px;background:rgb(128,128,128)"></i><i style="left:29.6px;top:0.0px;width:7.7px;height:7.8px;background:rgb(146,146,146)"></i><i style="left:0.0px;top:7.5px;width:7.7px;height:7.8px;background:rgb(142,142,142)"></i><i style="left:7.4px;top:7.5px;width:7.7px;height:7.8px;background:rgb(145,145,145)"></i><i style="left:14.8px;top:7.5px;width:7.7px;height:7.8px;background:rgb(138,138,138)"></i><i style="left:22.2px;top:7.5px;width:7.7px;height:7.8px;background:rgb(143,143,143)"></i><i style="left:29.6px;top:7.5px;width:7.7px;height:7.8px;background:rgb(143,143,143)"></i></div>
<div class="a" style="left:1084.0px;top:344.8px;width:45.0px;height:15.0px;background:rgb(140,140,140)"><i style="left:0.0px;top:0.0px;width:7.8px;height:7.8px;background:rgb(128,128,128)"></i><i style="left:7.5px;top:0.0px;width:7.8px;height:7.8px;background:rgb(137,137,137)"></i><i style="left:22.5px;top:0.0px;width:7.8px;height:7.8px;background:rgb(132,132,132)"></i><i style="left:30.0px;top:0.0px;width:7.8px;height:7.8px;background:rgb(132,132,132)"></i><i style="left:37.5px;top:0.0px;width:7.8px;height:7.8px;background:rgb(146,146,146)"></i><i style="left:0.0px;top:7.5px;width:7.8px;height:7.8px;background:rgb(145,145,145)"></i><i style="left:7.5px;top:7.5px;width:7.8px;height:7.8px;background:rgb(145,145,145)"></i><i style="left:15.0px;top:7.5px;width:7.8px;height:7.8px;background:rgb(136,136,136)"></i><i style="left:22.5px;top:7.5px;width:7.8px;height:7.8px;background:rgb(143,143,143)"></i><i style="left:30.0px;top:7.5px;width:7.8px;height:7.8px;background:rgb(145,145,145)"></i><i style="left:37.5px;top:7.5px;width:7.8px;height:7.8px;background:rgb(138,138,138)"></i></div>
<div class="a" style="left:1173.0px;top:344.8px;width:67.0px;height:15.0px;background:rgb(140,140,140)"><i style="left:0.0px;top:0.0px;width:7.7px;height:7.8px;background:rgb(122,122,122)"></i><i style="left:14.9px;top:0.0px;width:7.7px;height:7.8px;background:rgb(122,122,122)"></i><i style="left:22.3px;top:0.0px;width:7.7px;height:7.8px;background:rgb(122,122,122)"></i><i style="left:44.7px;top:0.0px;width:7.7px;height:7.8px;background:rgb(137,137,137)"></i><i style="left:59.6px;top:0.0px;width:7.7px;height:7.8px;background:rgb(137,137,137)"></i><i style="left:0.0px;top:7.5px;width:7.7px;height:7.8px;background:rgb(143,143,143)"></i><i style="left:22.3px;top:7.5px;width:7.7px;height:7.8px;background:rgb(143,143,143)"></i><i style="left:29.8px;top:7.5px;width:7.7px;height:7.8px;background:rgb(142,142,142)"></i><i style="left:37.2px;top:7.5px;width:7.7px;height:7.8px;background:rgb(138,138,138)"></i><i style="left:44.7px;top:7.5px;width:7.7px;height:7.8px;background:rgb(136,136,136)"></i><i style="left:52.1px;top:7.5px;width:7.7px;height:7.8px;background:rgb(145,145,145)"></i></div>
<div class="a" style="left:192.0px;top:375.4px;width:38.0px;height:15.0px;background:rgb(140,140,140)"><i style="left:0.0px;top:0.0px;width:7.9px;height:7.8px;background:rgb(128,128,128)"></i><i style="left:7.6px;top:0.0px;width:7.9px;height:7.8px;background:rgb(132,132,132)"></i><i style="left:15.2px;top:0.0px;width:7.9px;height:7.8px;background:rgb(122,122,122)"></i><i style="left:22.8px;top:0.0px;width:7.9px;height:7.8px;background:rgb(132,132,132)"></i><i style="left:30.4px;top:0.0px;width:7.9px;height:7.8px;background:rgb(135,135,135)"></i><i style="left:0.0px;top:7.5px;width:7.9px;height:7.8px;background:rgb(143,143,143)"></i><i style="left:7.6px;top:7.5px;width:7.9px;height:7.8px;background:rgb(138,138,138)"></i><i style="left:15.2px;top:7.5px;width:7.9px;height:7.8px;background:rgb(143,143,143)"></i><i style="left:22.8px;top:7.5px;width:7.9px;height:7.8px;background:rgb(138,138,138)"></i><i style="left:30.4px;top:7.5px;width:7.9px;height:7.8px;background:rgb(143,143,143)"></i></div>
<div class="a" style="left:1004.0px;top:375.4px;width:37.0px;height:15.0px;background:rgb(140,140,140)"><i style="left:0.0px;top:0.0px;width:7.7px;height:7.8px;background:rgb(122,122,122)"></i><i style="left:7.4px;top:0.0px;width:7.7px;height:7.8px;background:rgb(135,135,135)"></i><i style="left:14.8px;top:0.0px;width:7.7px;height:7.8px;background:rgb(122,122,122)"></i><i style="left:29.6px;top:0.0px;width:7.7px;height:7.8px;background:rgb(146,146,146)"></i><i style="left:0.0px;top:7.5px;width:7.7px;height:7.8px;background:rgb(138,138,138)"></i><i style="left:7.4px;top:7.5px;width:7.7px;height:7.8px;background:rgb(138,138,138)"></i><i style="left:14.8px;top:7.5px;width:7.7px;height:7.8px;background:rgb(138,138,138)"></i><i style="left:22.2px;top:7.5px;width:7.7px;height:7.8px;background:rgb(142,142,142)"></i><i style="left:29.6px;top:7.5px;width:7.7px;height:7.8px;background:rgb(143,143,143)"></i></div>
<div class="a" style="left:1084.0px;top:375.4px;width:45.0px;height:15.0px;background:rgb(140,140,140)"><i style="left:0.0px;top:0.0px;width:7.8px;height:7.8px;background:rgb(132,132,132)"></i><i style="left:15.0px;top:0.0px;width:7.8px;height:7.8px;background:rgb(137,137,137)"></i><i style="left:22.5px;top:0.0px;width:7.8px;height:7.8px;background:rgb(128,128,128)"></i><i style="left:30.0px;top:0.0px;width:7.8px;height:7.8px;background:rgb(132,132,132)"></i><i style="left:37.5px;top:0.0px;width:7.8px;height:7.8px;background:rgb(132,132,132)"></i><i style="left:0.0px;top:7.5px;width:7.8px;height:7.8px;background:rgb(136,136,136)"></i><i style="left:7.5px;top:7.5px;width:7.8px;height:7.8px;background:rgb(143,143,143)"></i><i style="left:15.0px;top:7.5px;width:7.8px;height:7.8px;background:rgb(136,136,136)"></i><i style="left:22.5px;top:7.5px;width:7.8px;height:7.8px;background:rgb(138,138,138)"></i><i style="left:30.0px;top:7.5px;width:7.8px;height:7.8px;background:rgb(138,138,138)"></i><i style="left:37.5px;top:7.5px;width:7.8px;height:7.8px;background:rgb(146,146,146)"></i></div>
<div class="a" style="left:1173.0px;top:375.4px;width:95.0px;height:15.0px;background:rgb(140,140,140)"><i style="left:7.9px;top:0.0px;width:8.2px;height:7.8px;background:rgb(132,132,132)"></i><i style="left:15.8px;top:0.0px;width:8.2px;height:7.8px;background:rgb(135,135,135)"></i><i style="left:23.8px;top:0.0px;width:8.2px;height:7.8px;background:rgb(132,132,132)"></i><i style="left:39.6px;top:0.0px;width:8.2px;height:7.8px;background:rgb(122,122,122)"></i><i style="left:55.4px;top:0.0px;width:8.2px;height:7.8px;background:rgb(135,135,135)"></i><i style="left:63.3px;top:0.0px;width:8.2px;height:7.8px;background:rgb(137,137,137)"></i><i style="left:71.2px;top:0.0px;width:8.2px;height:7.8px;background:rgb(132,132,132)"></i><i style="left:79.2px;top:0.0px;width:8.2px;height:7.8px;background:rgb(132,132,132)"></i><i style="left:87.1px;top:0.0px;width:8.2px;height:7.8px;background:rgb(132,132,132)"></i><i style="left:0.0px;top:7.5px;width:8.2px;height:7.8px;background:rgb(145,145,145)"></i><i style="left:15.8px;top:7.5px;width:8.2px;height:7.8px;background:rgb(142,142,142)"></i><i style="left:23.8px;top:7.5px;width:8.2px;height:7.8px;background:rgb(143,143,143)"></i><i style="left:31.7px;top:7.5px;width:8.2px;height:7.8px;background:rgb(143,143,143)"></i><i style="left:39.6px;top:7.5px;width:8.2px;height:7.8px;background:rgb(142,142,142)"></i><i style="left:47.5px;top:7.5px;width:8.2px;height:7.8px;background:rgb(143,143,143)"></i><i style="left:55.4px;top:7.5px;width:8.2px;height:7.8px;background:rgb(138,138,138)"></i><i style="left:63.3px;top:7.5px;width:8.2px;height:7.8px;background:rgb(145,145,145)"></i><i style="left:71.2px;top:7.5px;width:8.2px;height:7.8px;background:rgb(143,143,143)"></i><i style="left:87.1px;top:7.5px;width:8.2px;height:7.8px;background:rgb(143,143,143)"></i></div>
<div class="a" style="left:182.0px;top:406.0px;width:56.0px;height:15.0px;background:rgb(140,140,140)"><i style="left:8.0px;top:0.0px;width:8.3px;height:7.8px;background:rgb(122,122,122)"></i><i style="left:16.0px;top:0.0px;width:8.3px;height:7.8px;background:rgb(135,135,135)"></i><i style="left:32.0px;top:0.0px;width:8.3px;height:7.8px;background:rgb(135,135,135)"></i><i style="left:48.0px;top:0.0px;width:8.3px;height:7.8px;background:rgb(135,135,135)"></i><i style="left:0.0px;top:7.5px;width:8.3px;height:7.8px;background:rgb(136,136,136)"></i><i style="left:8.0px;top:7.5px;width:8.3px;height:7.8px;background:rgb(145,145,145)"></i><i style="left:16.0px;top:7.5px;width:8.3px;height:7.8px;background:rgb(138,138,138)"></i><i style="left:24.0px;top:7.5px;width:8.3px;height:7.8px;background:rgb(142,142,142)"></i><i style="left:32.0px;top:7.5px;width:8.3px;height:7.8px;background:rgb(136,136,136)"></i><i style="left:40.0px;top:7.5px;width:8.3px;height:7.8px;background:rgb(138,138,138)"></i><i style="left:48.0px;top:7.5px;width:8.3px;height:7.8px;background:rgb(145,145,145)"></i></div>
<div class="a" style="left:1011.0px;top:406.0px;width:23.0px;height:15.0px;background:rgb(140,140,140)"><i style="left:7.7px;top:0.0px;width:8.0px;height:7.8px;background:rgb(122,122,122)"></i><i style="left:0.0px;top:7.5px;width:8.0px;height:7.8px;background:rgb(145,145,145)"></i><i style="left:7.7px;top:7.5px;width:8.0px;height:7.8px;background:rgb(145,145,145)"></i><i style="left:15.3px;top:7.5px;width:8.0px;height:7.8px;background:rgb(145,145,145)"></i></div>
<div class="a" style="left:1084.0px;top:406.0px;width:45.0px;height:15.0px;background:rgb(140,140,140)"><i style="left:0.0px;top:0.0px;width:7.8px;height:7.8px;background:rgb(137,137,137)"></i><i style="left:15.0px;top:0.0px;width:7.8px;height:7.8px;background:rgb(137,137,137)"></i><i style="left:30.0px;top:0.0px;width:7.8px;height:7.8px;background:rgb(135,135,135)"></i><i style="left:0.0px;top:7.5px;width:7.8px;height:7.8px;background:rgb(136,136,136)"></i><i style="left:7.5px;top:7.5px;width:7.8px;height:7.8px;background:rgb(142,142,142)"></i><i style="left:15.0px;top:7.5px;width:7.8px;height:7.8px;background:rgb(142,142,142)"></i><i style="left:22.5px;top:7.5px;width:7.8px;height:7.8px;background:rgb(138,138,138)"></i><i style="left:30.0px;top:7.5px;width:7.8px;height:7.8px;background:rgb(145,145,145)"></i><i style="left:37.5px;top:7.5px;width:7.8px;height:7.8px;background:rgb(146,146,146)"></i></div>
<div class="a" style="left:1173.0px;top:406.0px;width:95.0px;height:15.0px;background:rgb(140,140,140)"><i style="left:0.0px;top:0.0px;width:8.2px;height:7.8px;background:rgb(135,135,135)"></i><i style="left:7.9px;top:0.0px;width:8.2px;height:7.8px;background:rgb(132,132,132)"></i><i style="left:15.8px;top:0.0px;width:8.2px;height:7.8px;background:rgb(135,135,135)"></i><i style="left:23.8px;top:0.0px;width:8.2px;height:7.8px;background:rgb(137,137,137)"></i><i style="left:31.7px;top:0.0px;width:8.2px;height:7.8px;background:rgb(135,135,135)"></i><i style="left:47.5px;top:0.0px;width:8.2px;height:7.8px;background:rgb(137,137,137)"></i><i style="left:55.4px;top:0.0px;width:8.2px;height:7.8px;background:rgb(137,137,137)"></i><i style="left:71.2px;top:0.0px;width:8.2px;height:7.8px;background:rgb(128,128,128)"></i><i style="left:79.2px;top:0.0px;width:8.2px;height:7.8px;background:rgb(137,137,137)"></i><i style="left:0.0px;top:7.5px;width:8.2px;height:7.8px;background:rgb(142,142,142)"></i><i style="left:7.9px;top:7.5px;width:8.2px;height:7.8px;background:rgb(142,142,142)"></i><i style="left:15.8px;top:7.5px;width:8.2px;height:7.8px;background:rgb(145,145,145)"></i><i style="left:23.8px;top:7.5px;width:8.2px;height:7.8px;background:rgb(136,136,136)"></i><i style="left:31.7px;top:7.5px;width:8.2px;height:7.8px;background:rgb(142,142,142)"></i><i style="left:47.5px;top:7.5px;width:8.2px;height:7.8px;background:rgb(143,143,143)"></i><i style="left:55.4px;top:7.5px;width:8.2px;height:7.8px;background:rgb(143,143,143)"></i><i style="left:71.2px;top:7.5px;width:8.2px;height:7.8px;background:rgb(143,143,143)"></i><i style="left:79.2px;top:7.5px;width:8.2px;height:7.8px;background:rgb(136,136,136)"></i><i style="left:87.1px;top:7.5px;width:8.2px;height:7.8px;background:rgb(136,136,136)"></i></div>
<div class="a" style="left:192.0px;top:436.6px;width:38.0px;height:15.0px;background:rgb(140,140,140)"><i style="left:0.0px;top:0.0px;width:7.9px;height:7.8px;background:rgb(122,122,122)"></i><i style="left:30.4px;top:0.0px;width:7.9px;height:7.8px;background:rgb(146,146,146)"></i><i style="left:0.0px;top:7.5px;width:7.9px;height:7.8px;background:rgb(138,138,138)"></i><i style="left:15.2px;top:7.5px;width:7.9px;height:7.8px;background:rgb(138,138,138)"></i><i style="left:22.8px;top:7.5px;width:7.9px;height:7.8px;background:rgb(142,142,142)"></i><i style="left:30.4px;top:7.5px;width:7.9px;height:7.8px;background:rgb(145,145,145)"></i></div>
<div class="a" style="left:996.0px;top:436.6px;width:53.0px;height:15.0px;background:rgb(140,140,140)"><i style="left:0.0px;top:0.0px;width:7.9px;height:7.8px;background:rgb(137,137,137)"></i><i style="left:7.6px;top:0.0px;width:7.9px;height:7.8px;background:rgb(135,135,135)"></i><i style="left:22.7px;top:0.0px;width:7.9px;height:7.8px;background:rgb(132,132,132)"></i><i style="left:30.3px;top:0.0px;width:7.9px;height:7.8px;background:rgb(132,132,132)"></i><i style="left:37.9px;top:0.0px;width:7.9px;height:7.8px;background:rgb(132,132,132)"></i><i style="left:45.4px;top:0.0px;width:7.9px;height:7.8px;background:rgb(135,135,135)"></i><i style="left:0.0px;top:7.5px;width:7.9px;height:7.8px;background:rgb(136,136,136)"></i><i style="left:15.1px;top:7.5px;width:7.9px;height:7.8px;background:rgb(136,136,136)"></i><i style="left:22.7px;top:7.5px;width:7.9px;height:7.8px;background:rgb(145,145,145)"></i><i style="left:30.3px;top:7.5px;width:7.9px;height:7.8px;background:rgb(138,138,138)"></i><i style="left:37.9px;top:7.5px;width:7.9px;height:7.8px;background:rgb(142,142,142)"></i><i style="left:45.4px;top:7.5px;width:7.9px;height:7.8px;background:rgb(146,146,146)"></i></div>
<div class="a" style="left:1084.0px;top:436.6px;width:45.0px;height:15.0px;background:rgb(140,140,140)"><i style="left:7.5px;top:0.0px;width:7.8px;height:7.8px;background:rgb(128,128,128)"></i><i style="left:22.5px;top:0.0px;width:7.8px;height:7.8px;background:rgb(122,122,122)"></i><i style="left:30.0px;top:0.0px;width:7.8px;height:7.8px;background:rgb(137,137,137)"></i><i style="left:0.0px;top:7.5px;width:7.8px;height:7.8px;background:rgb(138,138,138)"></i><i style="left:7.5px;top:7.5px;width:7.8px;height:7.8px;background:rgb(136,136,136)"></i><i style="left:22.5px;top:7.5px;width:7.8px;height:7.8px;background:rgb(136,136,136)"></i><i style="left:30.0px;top:7.5px;width:7.8px;height:7.8px;background:rgb(142,142,142)"></i><i style="left:37.5px;top:7.5px;width:7.8px;height:7.8px;background:rgb(136,136,136)"></i></div>
<div class="a" style="left:1173.0px;top:436.6px;width:95.0px;height:15.0px;background:rgb(140,140,140)"><i style="left:0.0px;top:0.0px;width:8.2px;height:7.8px;background:rgb(132,132,132)"></i><i style="left:7.9px;top:0.0px;width:8.2px;height:7.8px;background:rgb(135,135,135)"></i><i style="left:15.8px;top:0.0px;width:8.2px;height:7.8px;background:rgb(137,137,137)"></i><i style="left:23.8px;top:0.0px;width:8.2px;height:7.8px;background:rgb(132,132,132)"></i><i style="left:47.5px;top:0.0px;width:8.2px;height:7.8px;background:rgb(132,132,132)"></i><i style="left:55.4px;top:0.0px;width:8.2px;height:7.8px;background:rgb(128,128,128)"></i><i style="left:87.1px;top:0.0px;width:8.2px;height:7.8px;background:rgb(146,146,146)"></i><i style="left:0.0px;top:7.5px;width:8.2px;height:7.8px;background:rgb(138,138,138)"></i><i style="left:15.8px;top:7.5px;width:8.2px;height:7.8px;background:rgb(145,145,145)"></i><i style="left:31.7px;top:7.5px;width:8.2px;height:7.8px;background:rgb(143,143,143)"></i><i style="left:39.6px;top:7.5px;width:8.2px;height:7.8px;background:rgb(138,138,138)"></i><i style="left:55.4px;top:7.5px;width:8.2px;height:7.8px;background:rgb(142,142,142)"></i><i style="left:63.3px;top:7.5px;width:8.2px;height:7.8px;background:rgb(143,143,143)"></i><i style="left:71.2px;top:7.5px;width:8.2px;height:7.8px;background:rgb(145,145,145)"></i><i style="left:79.2px;top:7.5px;width:8.2px;height:7.8px;background:rgb(138,138,138)"></i></div>
<div class="a" style="left:192.0px;top:467.3px;width:38.0px;height:15.0px;background:rgb(140,140,140)"><i style="left:7.6px;top:0.0px;width:7.9px;height:7.8px;background:rgb(137,137,137)"></i><i style="left:0.0px;top:7.5px;width:7.9px;height:7.8px;background:rgb(143,143,143)"></i><i style="left:7.6px;top:7.5px;width:7.9px;height:7.8px;background:rgb(138,138,138)"></i><i style="left:15.2px;top:7.5px;width:7.9px;height:7.8px;background:rgb(143,143,143)"></i><i style="left:22.8px;top:7.5px;width:7.9px;height:7.8px;background:rgb(142,142,142)"></i><i style="left:30.4px;top:7.5px;width:7.9px;height:7.8px;background:rgb(138,138,138)"></i></div>
<div class="a" style="left:987.0px;top:467.3px;width:66.0px;height:15.0px;background:rgb(140,140,140)"><i style="left:7.3px;top:0.0px;width:7.6px;height:7.8px;background:rgb(128,128,128)"></i><i style="left:14.7px;top:0.0px;width:7.6px;height:7.8px;background:rgb(122,122,122)"></i><i style="left:22.0px;top:0.0px;width:7.6px;height:7.8px;background:rgb(128,128,128)"></i><i style="left:29.3px;top:0.0px;width:7.6px;height:7.8px;background:rgb(135,135,135)"></i><i style="left:36.7px;top:0.0px;width:7.6px;height:7.8px;background:rgb(128,128,128)"></i><i style="left:44.0px;top:0.0px;width:7.6px;height:7.8px;background:rgb(135,135,135)"></i><i style="left:51.3px;top:0.0px;width:7.6px;height:7.8px;background:rgb(132,132,132)"></i><i style="left:58.7px;top:0.0px;width:7.6px;height:7.8px;background:rgb(122,122,122)"></i><i style="left:0.0px;top:7.5px;width:7.6px;height:7.8px;background:rgb(143,143,143)"></i><i style="left:14.7px;top:7.5px;width:7.6px;height:7.8px;background:rgb(145,145,145)"></i><i style="left:22.0px;top:7.5px;width:7.6px;height:7.8px;background:rgb(138,138,138)"></i><i style="left:29.3px;top:7.5px;width:7.6px;height:7.8px;background:rgb(138,138,138)"></i><i style="left:44.0px;top:7.5px;width:7.6px;height:7.8px;background:rgb(138,138,138)"></i><i style="left:51.3px;top:7.5px;width:7.6px;height:7.8px;background:rgb(145,145,145)"></i><i style="left:58.7px;top:7.5px;width:7.6px;height:7.8px;background:rgb(145,145,145)"></i></div>
<div class="a" style="left:1084.0px;top:467.3px;width:45.0px;height:15.0px;background:rgb(140,140,140)"><i style="left:0.0px;top:0.0px;width:7.8px;height:7.8px;background:rgb(135,135,135)"></i><i style="left:7.5px;top:0.0px;width:7.8px;height:7.8px;background:rgb(137,137,137)"></i><i style="left:22.5px;top:0.0px;width:7.8px;height:7.8px;background:rgb(122,122,122)"></i><i style="left:37.5px;top:0.0px;width:7.8px;height:7.8px;background:rgb(146,146,146)"></i><i style="left:0.0px;top:7.5px;width:7.8px;height:7.8px;background:rgb(145,145,145)"></i><i style="left:15.0px;top:7.5px;width:7.8px;height:7.8px;background:rgb(142,142,142)"></i><i style="left:22.5px;top:7.5px;width:7.8px;height:7.8px;background:rgb(138,138,138)"></i><i style="left:30.0px;top:7.5px;width:7.8px;height:7.8px;background:rgb(136,136,136)"></i><i style="left:37.5px;top:7.5px;width:7.8px;height:7.8px;background:rgb(136,136,136)"></i></div>
<div class="a" style="left:1173.0px;top:467.3px;width:95.0px;height:15.0px;background:rgb(140,140,140)"><i style="left:0.0px;top:0.0px;width:8.2px;height:7.8px;background:rgb(135,135,135)"></i><i style="left:7.9px;top:0.0px;width:8.2px;height:7.8px;background:rgb(122,122,122)"></i><i style="left:15.8px;top:0.0px;width:8.2px;height:7.8px;background:rgb(132,132,132)"></i><i style="left:23.8px;top:0.0px;width:8.2px;height:7.8px;background:rgb(128,128,128)"></i><i style="left:31.7px;top:0.0px;width:8.2px;height:7.8px;background:rgb(137,137,137)"></i><i style="left:39.6px;top:0.0px;width:8.2px;height:7.8px;background:rgb(132,132,132)"></i><i style="left:55.4px;top:0.0px;width:8.2px;height:7.8px;background:rgb(128,128,128)"></i><i style="left:63.3px;top:0.0px;width:8.2px;height:7.8px;background:rgb(137,137,137)"></i><i style="left:79.2px;top:0.0px;width:8.2px;height:7.8px;background:rgb(135,135,135)"></i><i style="left:87.1px;top:0.0px;width:8.2px;height:7.8px;background:rgb(146,146,146)"></i><i style="left:0.0px;top:7.5px;width:8.2px;height:7.8px;background:rgb(142,142,142)"></i><i style="left:7.9px;top:7.5px;width:8.2px;height:7.8px;background:rgb(136,136,136)"></i><i style="left:39.6px;top:7.5px;width:8.2px;height:7.8px;background:rgb(143,143,143)"></i><i style="left:55.4px;top:7.5px;width:8.2px;height:7.8px;background:rgb(138,138,138)"></i><i style="left:63.3px;top:7.5px;width:8.2px;height:7.8px;background:rgb(136,136,136)"></i><i style="left:79.2px;top:7.5px;width:8.2px;height:7.8px;background:rgb(138,138,138)"></i><i style="left:87.1px;top:7.5px;width:8.2px;height:7.8px;background:rgb(146,146,146)"></i></div>
<div class="a" style="left:184.0px;top:497.9px;width:54.0px;height:15.0px;background:rgb(140,140,140)"><i style="left:0.0px;top:0.0px;width:8.0px;height:7.8px;background:rgb(137,137,137)"></i><i style="left:7.7px;top:0.0px;width:8.0px;height:7.8px;background:rgb(135,135,135)"></i><i style="left:23.1px;top:0.0px;width:8.0px;height:7.8px;background:rgb(135,135,135)"></i><i style="left:30.9px;top:0.0px;width:8.0px;height:7.8px;background:rgb(137,137,137)"></i><i style="left:38.6px;top:0.0px;width:8.0px;height:7.8px;background:rgb(132,132,132)"></i><i style="left:46.3px;top:0.0px;width:8.0px;height:7.8px;background:rgb(146,146,146)"></i><i style="left:0.0px;top:7.5px;width:8.0px;height:7.8px;background:rgb(143,143,143)"></i><i style="left:7.7px;top:7.5px;width:8.0px;height:7.8px;background:rgb(136,136,136)"></i><i style="left:15.4px;top:7.5px;width:8.0px;height:7.8px;background:rgb(136,136,136)"></i><i style="left:30.9px;top:7.5px;width:8.0px;height:7.8px;background:rgb(136,136,136)"></i><i style="left:38.6px;top:7.5px;width:8.0px;height:7.8px;background:rgb(138,138,138)"></i><i style="left:46.3px;top:7.5px;width:8.0px;height:7.8px;background:rgb(142,142,142)"></i></div>
<div class="a" style="left:996.0px;top:497.9px;width:53.0px;height:15.0px;background:rgb(140,140,140)"><i style="left:0.0px;top:0.0px;width:7.9px;height:7.8px;background:rgb(135,135,135)"></i><i style="left:15.1px;top:0.0px;width:7.9px;height:7.8px;background:rgb(137,137,137)"></i><i style="left:22.7px;top:0.0px;width:7.9px;height:7.8px;background:rgb(137,137,137)"></i><i style="left:30.3px;top:0.0px;width:7.9px;height:7.8px;background:rgb(128,128,128)"></i><i style="left:0.0px;top:7.5px;width:7.9px;height:7.8px;background:rgb(143,143,143)"></i><i style="left:7.6px;top:7.5px;width:7.9px;height:7.8px;background:rgb(138,138,138)"></i><i style="left:15.1px;top:7.5px;width:7.9px;height:7.8px;background:rgb(145,145,145)"></i><i style="left:22.7px;top:7.5px;width:7.9px;height:7.8px;background:rgb(145,145,145)"></i><i style="left:30.3px;top:7.5px;width:7.9px;height:7.8px;background:rgb(143,143,143)"></i><i style="left:37.9px;top:7.5px;width:7.9px;height:7.8px;background:rgb(142,142,142)"></i></div>
<div class="a" style="left:1084.0px;top:497.9px;width:45.0px;height:15.0px;background:rgb(140,140,140)"><i style="left:0.0px;top:0.0px;width:7.8px;height:7.8px;background:rgb(135,135,135)"></i><i style="left:15.0px;top:0.0px;width:7.8px;height:7.8px;background:rgb(137,137,137)"></i><i style="left:22.5px;top:0.0px;width:7.8px;height:7.8px;background:rgb(128,128,128)"></i><i style="left:30.0px;top:0.0px;width:7.8px;height:7.8px;background:rgb(132,132,132)"></i><i style="left:37.5px;top:0.0px;width:7.8px;height:7.8px;background:rgb(146,146,146)"></i><i style="left:0.0px;top:7.5px;width:7.8px;height:7.8px;background:rgb(145,145,145)"></i><i style="left:7.5px;top:7.5px;width:7.8px;height:7.8px;background:rgb(143,143,143)"></i><i style="left:15.0px;top:7.5px;width:7.8px;height:7.8px;background:rgb(145,145,145)"></i><i style="left:22.5px;top:7.5px;width:7.8px;height:7.8px;background:rgb(142,142,142)"></i><i style="left:30.0px;top:7.5px;width:7.8px;height:7.8px;background:rgb(145,145,145)"></i><i style="left:37.5px;top:7.5px;width:7.8px;height:7.8px;background:rgb(145,145,145)"></i></div>
<div class="a" style="left:1173.0px;top:497.9px;width:95.0px;height:15.0px;background:rgb(140,140,140)"><i style="left:7.9px;top:0.0px;width:8.2px;height:7.8px;background:rgb(132,132,132)"></i><i style="left:15.8px;top:0.0px;width:8.2px;height:7.8px;background:rgb(122,122,122)"></i><i style="left:23.8px;top:0.0px;width:8.2px;height:7.8px;background:rgb(132,132,132)"></i><i style="left:31.7px;top:0.0px;width:8.2px;height:7.8px;background:rgb(132,132,132)"></i><i style="left:39.6px;top:0.0px;width:8.2px;height:7.8px;background:rgb(122,122,122)"></i><i style="left:47.5px;top:0.0px;width:8.2px;height:7.8px;background:rgb(122,122,122)"></i><i style="left:55.4px;top:0.0px;width:8.2px;height:7.8px;background:rgb(122,122,122)"></i><i style="left:71.2px;top:0.0px;width:8.2px;height:7.8px;background:rgb(122,122,122)"></i><i style="left:79.2px;top:0.0px;width:8.2px;height:7.8px;background:rgb(128,128,128)"></i><i style="left:87.1px;top:0.0px;width:8.2px;height:7.8px;background:rgb(132,132,132)"></i><i style="left:0.0px;top:7.5px;width:8.2px;height:7.8px;background:rgb(145,145,145)"></i><i style="left:7.9px;top:7.5px;width:8.2px;height:7.8px;background:rgb(145,145,145)"></i><i style="left:15.8px;top:7.5px;width:8.2px;height:7.8px;background:rgb(145,145,145)"></i><i style="left:23.8px;top:7.5px;width:8.2px;height:7.8px;background:rgb(145,145,145)"></i><i style="left:31.7px;top:7.5px;width:8.2px;height:7.8px;background:rgb(138,138,138)"></i><i style="left:39.6px;top:7.5px;width:8.2px;height:7.8px;background:rgb(136,136,136)"></i><i style="left:47.5px;top:7.5px;width:8.2px;height:7.8px;background:rgb(136,136,136)"></i><i style="left:55.4px;top:7.5px;width:8.2px;height:7.8px;background:rgb(136,136,136)"></i><i style="left:63.3px;top:7.5px;width:8.2px;height:7.8px;background:rgb(138,138,138)"></i><i style="left:71.2px;top:7.5px;width:8.2px;height:7.8px;background:rgb(145,145,145)"></i><i style="left:87.1px;top:7.5px;width:8.2px;height:7.8px;background:rgb(136,136,136)"></i></div>
<div class="a" style="left:199.0px;top:528.5px;width:23.0px;height:15.0px;background:rgb(140,140,140)"><i style="left:0.0px;top:0.0px;width:8.0px;height:7.8px;background:rgb(135,135,135)"></i><i style="left:7.7px;top:0.0px;width:8.0px;height:7.8px;background:rgb(132,132,132)"></i><i style="left:0.0px;top:7.5px;width:8.0px;height:7.8px;background:rgb(145,145,145)"></i><i style="left:7.7px;top:7.5px;width:8.0px;height:7.8px;background:rgb(136,136,136)"></i><i style="left:15.3px;top:7.5px;width:8.0px;height:7.8px;background:rgb(145,145,145)"></i></div>
<div class="a" style="left:1011.0px;top:528.5px;width:23.0px;height:15.0px;background:rgb(140,140,140)"><i style="left:0.0px;top:0.0px;width:8.0px;height:7.8px;background:rgb(132,132,132)"></i><i style="left:7.7px;top:0.0px;width:8.0px;height:7.8px;background:rgb(128,128,128)"></i><i style="left:0.0px;top:7.5px;width:8.0px;height:7.8px;background:rgb(142,142,142)"></i><i style="left:15.3px;top:7.5px;width:8.0px;height:7.8px;background:rgb(136,136,136)"></i></div>
<div class="a" style="left:1084.0px;top:528.5px;width:45.0px;height:15.0px;background:rgb(140,140,140)"><i style="left:0.0px;top:0.0px;width:7.8px;height:7.8px;background:rgb(135,135,135)"></i><i style="left:7.5px;top:0.0px;width:7.8px;height:7.8px;background:rgb(122,122,122)"></i><i style="left:22.5px;top:0.0px;width:7.8px;height:7.8px;background:rgb(128,128,128)"></i><i style="left:30.0px;top:0.0px;width:7.8px;height:7.8px;background:rgb(132,132,132)"></i><i style="left:37.5px;top:0.0px;width:7.8px;height:7.8px;background:rgb(146,146,146)"></i><i style="left:0.0px;top:7.5px;width:7.8px;height:7.8px;background:rgb(143,143,143)"></i><i style="left:7.5px;top:7.5px;width:7.8px;height:7.8px;background:rgb(136,136,136)"></i><i style="left:15.0px;top:7.5px;width:7.8px;height:7.8px;background:rgb(145,145,145)"></i><i style="left:22.5px;top:7.5px;width:7.8px;height:7.8px;background:rgb(145,145,145)"></i><i style="left:30.0px;top:7.5px;width:7.8px;height:7.8px;background:rgb(142,142,142)"></i></div>
<div class="a" style="left:1173.0px;top:528.5px;width:90.0px;height:15.0px;background:rgb(140,140,140)"><i style="left:0.0px;top:0.0px;width:7.8px;height:7.8px;background:rgb(122,122,122)"></i><i style="left:7.5px;top:0.0px;width:7.8px;height:7.8px;background:rgb(137,137,137)"></i><i style="left:22.5px;top:0.0px;width:7.8px;height:7.8px;background:rgb(128,128,128)"></i><i style="left:30.0px;top:0.0px;width:7.8px;height:7.8px;background:rgb(122,122,122)"></i><i style="left:52.5px;top:0.0px;width:7.8px;height:7.8px;background:rgb(128,128,128)"></i><i style="left:60.0px;top:0.0px;width:7.8px;height:7.8px;background:rgb(128,128,128)"></i><i style="left:67.5px;top:0.0px;width:7.8px;height:7.8px;background:rgb(135,135,135)"></i><i style="left:75.0px;top:0.0px;width:7.8px;height:7.8px;background:rgb(135,135,135)"></i><i style="left:82.5px;top:0.0px;width:7.8px;height:7.8px;background:rgb(122,122,122)"></i><i style="left:0.0px;top:7.5px;width:7.8px;height:7.8px;background:rgb(142,142,142)"></i><i style="left:7.5px;top:7.5px;width:7.8px;height:7.8px;background:rgb(145,145,145)"></i><i style="left:22.5px;top:7.5px;width:7.8px;height:7.8px;background:rgb(136,136,136)"></i><i style="left:30.0px;top:7.5px;width:7.8px;height:7.8px;background:rgb(143,143,143)"></i><i style="left:37.5px;top:7.5px;width:7.8px;height:7.8px;background:rgb(145,145,145)"></i><i style="left:45.0px;top:7.5px;width:7.8px;height:7.8px;background:rgb(145,145,145)"></i><i style="left:52.5px;top:7.5px;width:7.8px;height:7.8px;background:rgb(138,138,138)"></i><i style="left:60.0px;top:7.5px;width:7.8px;height:7.8px;background:rgb(136,136,136)"></i><i style="left:67.5px;top:7.5px;width:7.8px;height:7.8px;background:rgb(143,143,143)"></i><i style="left:75.0px;top:7.5px;width:7.8px;height:7.8px;background:rgb(138,138,138)"></i><i style="left:82.5px;top:7.5px;width:7.8px;height:7.8px;background:rgb(146,146,146)"></i></div>
<div class="a" style="left:199.0px;top:559.2px;width:23.0px;height:15.0px;background:rgb(140,140,140)"><i style="left:0.0px;top:0.0px;width:8.0px;height:7.8px;background:rgb(128,128,128)"></i><i style="left:7.7px;top:0.0px;width:8.0px;height:7.8px;background:rgb(128,128,128)"></i><i style="left:15.3px;top:0.0px;width:8.0px;height:7.8px;background:rgb(137,137,137)"></i><i style="left:0.0px;top:7.5px;width:8.0px;height:7.8px;background:rgb(143,143,143)"></i><i style="left:7.7px;top:7.5px;width:8.0px;height:7.8px;background:rgb(143,143,143)"></i><i style="left:15.3px;top:7.5px;width:8.0px;height:7.8px;background:rgb(138,138,138)"></i></div>
<div class="a" style="left:1004.0px;top:559.2px;width:37.0px;height:15.0px;background:rgb(140,140,140)"><i style="left:7.4px;top:0.0px;width:7.7px;height:7.8px;background:rgb(135,135,135)"></i><i style="left:22.2px;top:0.0px;width:7.7px;height:7.8px;background:rgb(135,135,135)"></i><i style="left:29.6px;top:0.0px;width:7.7px;height:7.8px;background:rgb(137,137,137)"></i><i style="left:0.0px;top:7.5px;width:7.7px;height:7.8px;background:rgb(136,136,136)"></i><i style="left:7.4px;top:7.5px;width:7.7px;height:7.8px;background:rgb(145,145,145)"></i><i style="left:14.8px;top:7.5px;width:7.7px;height:7.8px;background:rgb(138,138,138)"></i><i style="left:22.2px;top:7.5px;width:7.7px;height:7.8px;background:rgb(145,145,145)"></i><i style="left:29.6px;top:7.5px;width:7.7px;height:7.8px;background:rgb(146,146,146)"></i></div>
<div class="a" style="left:1084.0px;top:559.2px;width:45.0px;height:15.0px;background:rgb(140,140,140)"><i style="left:0.0px;top:0.0px;width:7.8px;height:7.8px;background:rgb(132,132,132)"></i><i style="left:7.5px;top:0.0px;width:7.8px;height:7.8px;background:rgb(137,137,137)"></i><i style="left:15.0px;top:0.0px;width:7.8px;height:7.8px;background:rgb(135,135,135)"></i><i style="left:22.5px;top:0.0px;width:7.8px;height:7.8px;background:rgb(135,135,135)"></i><i style="left:30.0px;top:0.0px;width:7.8px;height:7.8px;background:rgb(135,135,135)"></i><i style="left:37.5px;top:0.0px;width:7.8px;height:7.8px;background:rgb(146,146,146)"></i><i style="left:0.0px;top:7.5px;width:7.8px;height:7.8px;background:rgb(143,143,143)"></i><i style="left:7.5px;top:7.5px;width:7.8px;height:7.8px;background:rgb(138,138,138)"></i><i style="left:22.5px;top:7.5px;width:7.8px;height:7.8px;background:rgb(136,136,136)"></i><i style="left:30.0px;top:7.5px;width:7.8px;height:7.8px;background:rgb(142,142,142)"></i><i style="left:37.5px;top:7.5px;width:7.8px;height:7.8px;background:rgb(146,146,146)"></i></div>
<div class="a" style="left:1173.0px;top:559.2px;width:82.0px;height:15.0px;background:rgb(140,140,140)"><i style="left:7.5px;top:0.0px;width:7.8px;height:7.8px;background:rgb(122,122,122)"></i><i style="left:14.9px;top:0.0px;width:7.8px;height:7.8px;background:rgb(132,132,132)"></i><i style="left:22.4px;top:0.0px;width:7.8px;height:7.8px;background:rgb(135,135,135)"></i><i style="left:29.8px;top:0.0px;width:7.8px;height:7.8px;background:rgb(137,137,137)"></i><i style="left:37.3px;top:0.0px;width:7.8px;height:7.8px;background:rgb(135,135,135)"></i><i style="left:67.1px;top:0.0px;width:7.8px;height:7.8px;background:rgb(132,132,132)"></i><i style="left:74.5px;top:0.0px;width:7.8px;height:7.8px;background:rgb(146,146,146)"></i><i style="left:0.0px;top:7.5px;width:7.8px;height:7.8px;background:rgb(143,143,143)"></i><i style="left:22.4px;top:7.5px;width:7.8px;height:7.8px;background:rgb(138,138,138)"></i><i style="left:29.8px;top:7.5px;width:7.8px;height:7.8px;background:rgb(143,143,143)"></i><i style="left:37.3px;top:7.5px;width:7.8px;height:7.8px;background:rgb(145,145,145)"></i><i style="left:44.7px;top:7.5px;width:7.8px;height:7.8px;background:rgb(143,143,143)"></i><i style="left:59.6px;top:7.5px;width:7.8px;height:7.8px;background:rgb(136,136,136)"></i><i style="left:67.1px;top:7.5px;width:7.8px;height:7.8px;background:rgb(145,145,145)"></i><i style="left:74.5px;top:7.5px;width:7.8px;height:7.8px;background:rgb(146,146,146)"></i></div>
<div class="a" style="left:199.0px;top:589.8px;width:23.0px;height:15.0px;background:rgb(140,140,140)"><i style="left:0.0px;top:0.0px;width:8.0px;height:7.8px;background:rgb(135,135,135)"></i><i style="left:7.7px;top:0.0px;width:8.0px;height:7.8px;background:rgb(135,135,135)"></i><i style="left:0.0px;top:7.5px;width:8.0px;height:7.8px;background:rgb(138,138,138)"></i><i style="left:7.7px;top:7.5px;width:8.0px;height:7.8px;background:rgb(136,136,136)"></i><i style="left:15.3px;top:7.5px;width:8.0px;height:7.8px;background:rgb(142,142,142)"></i></div>
<div class="a" style="left:1011.0px;top:589.8px;width:15.0px;height:15.0px;background:rgb(140,140,140)"><i style="left:0.0px;top:0.0px;width:7.8px;height:7.8px;background:rgb(128,128,128)"></i><i style="left:7.5px;top:0.0px;width:7.8px;height:7.8px;background:rgb(135,135,135)"></i><i style="left:0.0px;top:7.5px;width:7.8px;height:7.8px;background:rgb(142,142,142)"></i></div>
<div class="a" style="left:1084.0px;top:589.8px;width:45.0px;height:15.0px;background:rgb(140,140,140)"><i style="left:0.0px;top:0.0px;width:7.8px;height:7.8px;background:rgb(128,128,128)"></i><i style="left:15.0px;top:0.0px;width:7.8px;height:7.8px;background:rgb(135,135,135)"></i><i style="left:22.5px;top:0.0px;width:7.8px;height:7.8px;background:rgb(137,137,137)"></i><i style="left:30.0px;top:0.0px;width:7.8px;height:7.8px;background:rgb(135,135,135)"></i><i style="left:37.5px;top:0.0px;width:7.8px;height:7.8px;background:rgb(146,146,146)"></i><i style="left:7.5px;top:7.5px;width:7.8px;height:7.8px;background:rgb(136,136,136)"></i><i style="left:30.0px;top:7.5px;width:7.8px;height:7.8px;background:rgb(142,142,142)"></i><i style="left:37.5px;top:7.5px;width:7.8px;height:7.8px;background:rgb(136,136,136)"></i></div>
<div class="a" style="left:1173.0px;top:589.8px;width:67.0px;height:15.0px;background:rgb(140,140,140)"><i style="left:7.4px;top:0.0px;width:7.7px;height:7.8px;background:rgb(128,128,128)"></i><i style="left:22.3px;top:0.0px;width:7.7px;height:7.8px;background:rgb(128,128,128)"></i><i style="left:29.8px;top:0.0px;width:7.7px;height:7.8px;background:rgb(137,137,137)"></i><i style="left:37.2px;top:0.0px;width:7.7px;height:7.8px;background:rgb(137,137,137)"></i><i style="left:44.7px;top:0.0px;width:7.7px;height:7.8px;background:rgb(137,137,137)"></i><i style="left:59.6px;top:0.0px;width:7.7px;height:7.8px;background:rgb(135,135,135)"></i><i style="left:0.0px;top:7.5px;width:7.7px;height:7.8px;background:rgb(143,143,143)"></i><i style="left:7.4px;top:7.5px;width:7.7px;height:7.8px;background:rgb(136,136,136)"></i><i style="left:22.3px;top:7.5px;width:7.7px;height:7.8px;background:rgb(142,142,142)"></i><i style="left:37.2px;top:7.5px;width:7.7px;height:7.8px;background:rgb(136,136,136)"></i><i style="left:52.1px;top:7.5px;width:7.7px;height:7.8px;background:rgb(136,136,136)"></i><i style="left:59.6px;top:7.5px;width:7.7px;height:7.8px;background:rgb(136,136,136)"></i></div>
<div class="a" style="left:360.0px;top:497.9px;width:54.0px;height:15.0px;background:rgb(140,140,140)"><i style="left:0.0px;top:0.0px;width:8.0px;height:7.8px;background:rgb(137,137,137)"></i><i style="left:7.7px;top:0.0px;width:8.0px;height:7.8px;background:rgb(128,128,128)"></i><i style="left:30.9px;top:0.0px;width:8.0px;height:7.8px;background:rgb(137,137,137)"></i><i style="left:38.6px;top:0.0px;width:8.0px;height:7.8px;background:rgb(135,135,135)"></i><i style="left:46.3px;top:0.0px;width:8.0px;height:7.8px;background:rgb(132,132,132)"></i><i style="left:7.7px;top:7.5px;width:8.0px;height:7.8px;background:rgb(142,142,142)"></i><i style="left:15.4px;top:7.5px;width:8.0px;height:7.8px;background:rgb(136,136,136)"></i><i style="left:23.1px;top:7.5px;width:8.0px;height:7.8px;background:rgb(145,145,145)"></i><i style="left:30.9px;top:7.5px;width:8.0px;height:7.8px;background:rgb(142,142,142)"></i><i style="left:38.6px;top:7.5px;width:8.0px;height:7.8px;background:rgb(143,143,143)"></i><i style="left:46.3px;top:7.5px;width:8.0px;height:7.8px;background:rgb(146,146,146)"></i></div>
<div class="a" style="left:332.0px;top:528.5px;width:112.0px;height:15.0px;background:rgb(140,140,140)"><i style="left:14.9px;top:0.0px;width:7.8px;height:7.8px;background:rgb(128,128,128)"></i><i style="left:22.4px;top:0.0px;width:7.8px;height:7.8px;background:rgb(135,135,135)"></i><i style="left:29.9px;top:0.0px;width:7.8px;height:7.8px;background:rgb(135,135,135)"></i><i style="left:37.3px;top:0.0px;width:7.8px;height:7.8px;background:rgb(132,132,132)"></i><i style="left:44.8px;top:0.0px;width:7.8px;height:7.8px;background:rgb(122,122,122)"></i><i style="left:59.7px;top:0.0px;width:7.8px;height:7.8px;background:rgb(128,128,128)"></i><i style="left:67.2px;top:0.0px;width:7.8px;height:7.8px;background:rgb(122,122,122)"></i><i style="left:74.7px;top:0.0px;width:7.8px;height:7.8px;background:rgb(137,137,137)"></i><i style="left:82.1px;top:0.0px;width:7.8px;height:7.8px;background:rgb(135,135,135)"></i><i style="left:97.1px;top:0.0px;width:7.8px;height:7.8px;background:rgb(132,132,132)"></i><i style="left:104.5px;top:0.0px;width:7.8px;height:7.8px;background:rgb(146,146,146)"></i><i style="left:0.0px;top:7.5px;width:7.8px;height:7.8px;background:rgb(142,142,142)"></i><i style="left:37.3px;top:7.5px;width:7.8px;height:7.8px;background:rgb(145,145,145)"></i><i style="left:44.8px;top:7.5px;width:7.8px;height:7.8px;background:rgb(145,145,145)"></i><i style="left:52.3px;top:7.5px;width:7.8px;height:7.8px;background:rgb(145,145,145)"></i><i style="left:67.2px;top:7.5px;width:7.8px;height:7.8px;background:rgb(142,142,142)"></i><i style="left:74.7px;top:7.5px;width:7.8px;height:7.8px;background:rgb(145,145,145)"></i><i style="left:82.1px;top:7.5px;width:7.8px;height:7.8px;background:rgb(138,138,138)"></i><i style="left:97.1px;top:7.5px;width:7.8px;height:7.8px;background:rgb(142,142,142)"></i><i style="left:104.5px;top:7.5px;width:7.8px;height:7.8px;background:rgb(143,143,143)"></i></div>
<div class="a" style="left:621.0px;top:528.5px;width:45.0px;height:15.0px;background:rgb(140,140,140)"><i style="left:15.0px;top:0.0px;width:7.8px;height:7.8px;background:rgb(128,128,128)"></i><i style="left:0.0px;top:7.5px;width:7.8px;height:7.8px;background:rgb(142,142,142)"></i><i style="left:7.5px;top:7.5px;width:7.8px;height:7.8px;background:rgb(143,143,143)"></i><i style="left:15.0px;top:7.5px;width:7.8px;height:7.8px;background:rgb(138,138,138)"></i><i style="left:22.5px;top:7.5px;width:7.8px;height:7.8px;background:rgb(142,142,142)"></i><i style="left:37.5px;top:7.5px;width:7.8px;height:7.8px;background:rgb(142,142,142)"></i></div>
<div class="a" style="left:352.5px;top:559.2px;width:68.2px;height:15.0px;background:rgb(140,140,140)"><i style="left:0.0px;top:0.0px;width:7.9px;height:7.8px;background:rgb(132,132,132)"></i><i style="left:37.9px;top:0.0px;width:7.9px;height:7.8px;background:rgb(137,137,137)"></i><i style="left:45.5px;top:0.0px;width:7.9px;height:7.8px;background:rgb(132,132,132)"></i><i style="left:60.6px;top:0.0px;width:7.9px;height:7.8px;background:rgb(146,146,146)"></i><i style="left:7.6px;top:7.5px;width:7.9px;height:7.8px;background:rgb(143,143,143)"></i><i style="left:15.2px;top:7.5px;width:7.9px;height:7.8px;background:rgb(138,138,138)"></i><i style="left:22.7px;top:7.5px;width:7.9px;height:7.8px;background:rgb(136,136,136)"></i><i style="left:30.3px;top:7.5px;width:7.9px;height:7.8px;background:rgb(145,145,145)"></i><i style="left:37.9px;top:7.5px;width:7.9px;height:7.8px;background:rgb(142,142,142)"></i><i style="left:45.5px;top:7.5px;width:7.9px;height:7.8px;background:rgb(142,142,142)"></i><i style="left:53.0px;top:7.5px;width:7.9px;height:7.8px;background:rgb(142,142,142)"></i><i style="left:60.6px;top:7.5px;width:7.9px;height:7.8px;background:rgb(145,145,145)"></i></div>
<div class="a" style="left:621.0px;top:559.2px;width:84.5px;height:15.0px;background:rgb(140,140,140)"><i style="left:0.0px;top:0.0px;width:8.0px;height:7.8px;background:rgb(135,135,135)"></i><i style="left:7.7px;top:0.0px;width:8.0px;height:7.8px;background:rgb(137,137,137)"></i><i style="left:15.4px;top:0.0px;width:8.0px;height:7.8px;background:rgb(137,137,137)"></i><i style="left:23.0px;top:0.0px;width:8.0px;height:7.8px;background:rgb(122,122,122)"></i><i style="left:38.4px;top:0.0px;width:8.0px;height:7.8px;background:rgb(135,135,135)"></i><i style="left:46.1px;top:0.0px;width:8.0px;height:7.8px;background:rgb(137,137,137)"></i><i style="left:53.8px;top:0.0px;width:8.0px;height:7.8px;background:rgb(132,132,132)"></i><i style="left:61.5px;top:0.0px;width:8.0px;height:7.8px;background:rgb(137,137,137)"></i><i style="left:76.8px;top:0.0px;width:8.0px;height:7.8px;background:rgb(128,128,128)"></i><i style="left:0.0px;top:7.5px;width:8.0px;height:7.8px;background:rgb(145,145,145)"></i><i style="left:7.7px;top:7.5px;width:8.0px;height:7.8px;background:rgb(138,138,138)"></i><i style="left:15.4px;top:7.5px;width:8.0px;height:7.8px;background:rgb(136,136,136)"></i><i style="left:30.7px;top:7.5px;width:8.0px;height:7.8px;background:rgb(138,138,138)"></i><i style="left:38.4px;top:7.5px;width:8.0px;height:7.8px;background:rgb(142,142,142)"></i><i style="left:46.1px;top:7.5px;width:8.0px;height:7.8px;background:rgb(142,142,142)"></i><i style="left:53.8px;top:7.5px;width:8.0px;height:7.8px;background:rgb(145,145,145)"></i><i style="left:61.5px;top:7.5px;width:8.0px;height:7.8px;background:rgb(142,142,142)"></i><i style="left:69.1px;top:7.5px;width:8.0px;height:7.8px;background:rgb(142,142,142)"></i></div>
<div class="a" style="left:337.0px;top:589.8px;width:99.7px;height:15.0px;background:rgb(140,140,140)"><i style="left:0.0px;top:0.0px;width:8.0px;height:7.8px;background:rgb(122,122,122)"></i><i style="left:30.7px;top:0.0px;width:8.0px;height:7.8px;background:rgb(135,135,135)"></i><i style="left:38.3px;top:0.0px;width:8.0px;height:7.8px;background:rgb(128,128,128)"></i><i style="left:46.0px;top:0.0px;width:8.0px;height:7.8px;background:rgb(122,122,122)"></i><i style="left:53.7px;top:0.0px;width:8.0px;height:7.8px;background:rgb(122,122,122)"></i><i style="left:61.4px;top:0.0px;width:8.0px;height:7.8px;background:rgb(135,135,135)"></i><i style="left:69.0px;top:0.0px;width:8.0px;height:7.8px;background:rgb(132,132,132)"></i><i style="left:76.7px;top:0.0px;width:8.0px;height:7.8px;background:rgb(135,135,135)"></i><i style="left:0.0px;top:7.5px;width:8.0px;height:7.8px;background:rgb(143,143,143)"></i><i style="left:7.7px;top:7.5px;width:8.0px;height:7.8px;background:rgb(142,142,142)"></i><i style="left:15.3px;top:7.5px;width:8.0px;height:7.8px;background:rgb(142,142,142)"></i><i style="left:23.0px;top:7.5px;width:8.0px;height:7.8px;background:rgb(138,138,138)"></i><i style="left:30.7px;top:7.5px;width:8.0px;height:7.8px;background:rgb(136,136,136)"></i><i style="left:38.3px;top:7.5px;width:8.0px;height:7.8px;background:rgb(138,138,138)"></i><i style="left:46.0px;top:7.5px;width:8.0px;height:7.8px;background:rgb(138,138,138)"></i><i style="left:53.7px;top:7.5px;width:8.0px;height:7.8px;background:rgb(138,138,138)"></i><i style="left:61.4px;top:7.5px;width:8.0px;height:7.8px;background:rgb(143,143,143)"></i><i style="left:69.0px;top:7.5px;width:8.0px;height:7.8px;background:rgb(145,145,145)"></i><i style="left:76.7px;top:7.5px;width:8.0px;height:7.8px;background:rgb(136,136,136)"></i><i style="left:84.4px;top:7.5px;width:8.0px;height:7.8px;background:rgb(145,145,145)"></i><i style="left:92.0px;top:7.5px;width:8.0px;height:7.8px;background:rgb(145,145,145)"></i></div>
<div class="a" style="left:621.0px;top:589.8px;width:84.5px;height:15.0px;background:rgb(140,140,140)"><i style="left:0.0px;top:0.0px;width:8.0px;height:7.8px;background:rgb(122,122,122)"></i><i style="left:7.7px;top:0.0px;width:8.0px;height:7.8px;background:rgb(135,135,135)"></i><i style="left:23.0px;top:0.0px;width:8.0px;height:7.8px;background:rgb(132,132,132)"></i><i style="left:30.7px;top:0.0px;width:8.0px;height:7.8px;background:rgb(122,122,122)"></i><i style="left:53.8px;top:0.0px;width:8.0px;height:7.8px;background:rgb(122,122,122)"></i><i style="left:76.8px;top:0.0px;width:8.0px;height:7.8px;background:rgb(132,132,132)"></i><i style="left:0.0px;top:7.5px;width:8.0px;height:7.8px;background:rgb(145,145,145)"></i><i style="left:7.7px;top:7.5px;width:8.0px;height:7.8px;background:rgb(145,145,145)"></i><i style="left:23.0px;top:7.5px;width:8.0px;height:7.8px;background:rgb(138,138,138)"></i><i style="left:30.7px;top:7.5px;width:8.0px;height:7.8px;background:rgb(145,145,145)"></i><i style="left:46.1px;top:7.5px;width:8.0px;height:7.8px;background:rgb(143,143,143)"></i><i style="left:53.8px;top:7.5px;width:8.0px;height:7.8px;background:rgb(145,145,145)"></i><i style="left:61.5px;top:7.5px;width:8.0px;height:7.8px;background:rgb(142,142,142)"></i><i style="left:69.1px;top:7.5px;width:8.0px;height:7.8px;background:rgb(145,145,145)"></i><i style="left:76.8px;top:7.5px;width:8.0px;height:7.8px;background:rgb(146,146,146)"></i></div>
<div class="a" style="left:621.0px;top:503.0px;width:59.0px;height:10.2px;background:rgb(140,140,140)"><i style="left:0.0px;top:0.0px;width:7.7px;height:10.5px;background:rgb(137,137,137)"></i><i style="left:7.4px;top:0.0px;width:7.7px;height:10.5px;background:rgb(132,132,132)"></i><i style="left:14.8px;top:0.0px;width:7.7px;height:10.5px;background:rgb(132,132,132)"></i><i style="left:29.5px;top:0.0px;width:7.7px;height:10.5px;background:rgb(135,135,135)"></i><i style="left:36.9px;top:0.0px;width:7.7px;height:10.5px;background:rgb(137,137,137)"></i><i style="left:51.6px;top:0.0px;width:7.7px;height:10.5px;background:rgb(122,122,122)"></i></div>
<div class="a" style="left:27px;top:186.200px;width:21.200px;height:22.800px;border:1.500px solid #f0302c"></div>
</div>
<div id="dlg">
<div id="dbg"><div class="hd"></div></div>
<div class="a" style="left:14.5px;top:5.5px;font-size:13px;line-height:20px;color:#444">物流信息</div>
<svg class="a" style="left:576.700px;top:9.200px" width="12" height="12" viewBox="0 0 12 12"><path d="M0.500 0.500L11.500 11.500M11.500 0.500L0.500 11.500" stroke="#c3c6cb" stroke-width="1.600" fill="none"/></svg>
<div class="a" style="left:75px;top:67px;width:448px;height:3px;background:#62a8ea"></div>
<div class="stp" style="left:60.0px"><svg width="29" height="29" viewBox="0 0 29 29"><path d="M9.1 8.7h10.6l1.9 2.6h-14.4z" fill="#fff"/><path d="M7.2 11.9h14.4v7.9a.8.8 0 0 1-.8.8h-12.800a.8.8 0 0 1-.8-.8z" fill="#fff"/><rect x="16.800" y="13.500" width="3.600" height="1.500" rx=".7" fill="#62a8ea"/></svg></div>
<div class="stl" style="left:34.5px">已发货</div>
<div class="stp" style="left:209.0px"><svg width="29" height="29" viewBox="0 0 29 29"><path d="M9.4 8.900h9.600v2.800h2.500l2.300 2.900v3.600h-1.200a1.700 1.700 0 0 0-3.400 0h-5a1.700 1.700 0 0 0-3.400 0h-1.400v-1.600h-2.200v-1.100h3.100v-1.300h-4.300v-1.100h4.300v-1.300h-3.100v-1.100h2.200z" fill="#fff"/><circle cx="12.500" cy="19.200" r="1.400" fill="#fff"/><circle cx="20.900" cy="19.200" r="1.400" fill="#fff"/><path d="M19.800 12.700h1.300l1.600 2h-2.900z" fill="#62a8ea"/></svg></div>
<div class="stl" style="left:183.5px">运输</div>
<div class="stp" style="left:358.5px"><svg width="29" height="29" viewBox="0 0 29 29"><path d="M8.300 12.200a5.300 5.600 0 0 1 10.600 0h3.400v1.100h-14z" fill="#fff"/><path d="M9.500 13.300h8.400a4.200 4.400 0 0 1-8.400 0z" fill="#fff"/><path d="M10.900 13.300h5.600a2.800 2.700 0 0 1-5.600 0z" fill="#62a8ea"/><path d="M8.100 22.300c.2-2.500 1.400-3.800 3.300-4.200l2.300 2.600l2.300-2.600c1.900.4 3.100 1.700 3.300 4.200z" fill="#fff"/></svg></div>
<div class="stl" style="left:333.0px">派送</div>
<div class="stp" style="left:508.0px"><svg width="29" height="29" viewBox="0 0 29 29"><path d="M8.7 14.6L12.7 18.6L20.5 10.6" fill="none" stroke="#fff" stroke-width="2.3" stroke-linecap="round" stroke-linejoin="round"/></svg></div>
<div class="stl" style="left:482.5px">已签收</div>
<div id="sc">
<div class="a" style="left:197px;top:23px;width:1px;height:260px;background:#dcdfe4"></div>
<span class="b" style="left:45px;top:11.40px">2020-06-28/周日</span>
<span class="b" style="left:109px;top:11.40px;width:73px;text-align:right">18:44:02</span>
<div class="a" style="left:192.1px;top:12.80px;width:10.2px;height:10.2px;border-radius:50%;border:2.3px solid #3a8ee6;background:#fff"></div>
<span class="m" style="left:213px;top:12.30px">签收</span>
<span class="m d" style="left:271px;top:12.30px">客户签收人: <em style="display:inline-block;width:22px"></em> 已签收 感谢使用圆通速递，期待再次为您服务 如有疑问请联系：<em style="display:inline-block;width:65.3px"></em>，投诉电话：</span>
<span class="t" style="left:109px;top:74.25px;width:73px;text-align:right">16:00:16</span>
<div class="a" style="left:195px;top:79.80px;width:4.4px;height:4.4px;border-radius:50%;background:#dfe2e6;box-shadow:0 0 0 1px #fff"></div>
<span style="left:213px;top:76.20px">派件</span>
<span class="d" style="left:271px;top:76.20px">【广东省揭阳市揭东区新亨镇分部公司】 派件中 派件人: 廖小东 电话 <em style="display:inline-block;width:111.8px"></em>，请联系：</span>
<span class="t" style="left:109px;top:125.90px;width:73px;text-align:right">14:06:52</span>
<div class="a" style="left:195px;top:131.95px;width:4.4px;height:4.4px;border-radius:50%;background:#dfe2e6;box-shadow:0 0 0 1px #fff"></div>
<span style="left:213px;top:128.35px">在途</span>
<span class="d" style="left:271px;top:128.35px">【广东省揭阳市揭东区新亨】 已发出 下一站 【广东省揭阳市揭东区新亨镇分部公司】</span>
<span class="t" style="left:109px;top:178.30px;width:73px;text-align:right">14:06:15</span>
<div class="a" style="left:195px;top:183.90px;width:4.4px;height:4.4px;border-radius:50%;background:#dfe2e6;box-shadow:0 0 0 1px #fff"></div>
<span style="left:213px;top:180.30px">在途</span>
<span class="d" style="left:271px;top:180.30px">【广东省揭阳市揭东区新亨公司】 已收入</span>
<span class="t" style="left:109px;top:215.80px;width:73px;text-align:right">09:07:05</span>
<div class="a" style="left:195px;top:221.70px;width:4.4px;height:4.4px;border-radius:50%;background:#dfe2e6;box-shadow:0 0 0 1px #fff"></div>
<span style="left:213px;top:218.10px">在途</span>
<span class="d" style="left:271px;top:218.10px">【揭阳转运中心】 已发出 下一站 【广东省揭阳市揭东区新亨公司】</span>
</div>
<div id="dz">
<div class="a" style="left:328.3px;top:130.4px;width:26.7px;height:15.2px"><i style="left:0.00px;top:0.00px;width:6.98px;height:7.90px;background:rgb(244,244,244)"></i><i style="left:6.68px;top:0.00px;width:6.98px;height:7.90px;background:rgb(220,220,220)"></i><i style="left:13.35px;top:0.00px;width:6.98px;height:7.90px;background:rgb(216,216,216)"></i><i style="left:20.03px;top:0.00px;width:6.98px;height:7.90px;background:rgb(246,246,246)"></i><i style="left:0.00px;top:7.60px;width:6.98px;height:7.90px;background:rgb(244,244,244)"></i><i style="left:6.68px;top:7.60px;width:6.98px;height:7.90px;background:rgb(216,216,216)"></i><i style="left:13.35px;top:7.60px;width:6.98px;height:7.90px;background:rgb(214,214,214)"></i><i style="left:20.03px;top:7.60px;width:6.98px;height:7.90px;background:rgb(246,246,246)"></i></div>
<div class="a" style="left:381.5px;top:145.6px;width:66.3px;height:14.1px"><i style="left:0.00px;top:0.00px;width:7.67px;height:7.35px;background:rgb(240,240,240)"></i><i style="left:7.37px;top:0.00px;width:7.67px;height:7.35px;background:rgb(222,222,222)"></i><i style="left:14.73px;top:0.00px;width:7.67px;height:7.35px;background:rgb(226,226,226)"></i><i style="left:22.10px;top:0.00px;width:7.67px;height:7.35px;background:rgb(228,228,228)"></i><i style="left:29.47px;top:0.00px;width:7.67px;height:7.35px;background:rgb(226,226,226)"></i><i style="left:36.83px;top:0.00px;width:7.67px;height:7.35px;background:rgb(228,228,228)"></i><i style="left:44.20px;top:0.00px;width:7.67px;height:7.35px;background:rgb(224,224,224)"></i><i style="left:51.57px;top:0.00px;width:7.67px;height:7.35px;background:rgb(222,222,222)"></i><i style="left:58.93px;top:0.00px;width:7.67px;height:7.35px;background:rgb(226,226,226)"></i><i style="left:0.00px;top:7.05px;width:7.67px;height:7.35px;background:rgb(242,242,242)"></i><i style="left:7.37px;top:7.05px;width:7.67px;height:7.35px;background:rgb(218,218,218)"></i><i style="left:14.73px;top:7.05px;width:7.67px;height:7.35px;background:rgb(222,222,222)"></i><i style="left:22.10px;top:7.05px;width:7.67px;height:7.35px;background:rgb(230,230,230)"></i><i style="left:29.47px;top:7.05px;width:7.67px;height:7.35px;background:rgb(226,226,226)"></i><i style="left:36.83px;top:7.05px;width:7.67px;height:7.35px;background:rgb(230,230,230)"></i><i style="left:44.20px;top:7.05px;width:7.67px;height:7.35px;background:rgb(232,232,232)"></i><i style="left:51.57px;top:7.05px;width:7.67px;height:7.35px;background:rgb(226,226,226)"></i><i style="left:58.93px;top:7.05px;width:7.67px;height:7.35px;background:rgb(224,224,224)"></i></div>
<div class="a" style="left:271.0px;top:161.3px;width:69.0px;height:7.9px"><i style="left:0.00px;top:0.00px;width:7.97px;height:8.20px;background:rgb(196,196,196)"></i><i style="left:7.67px;top:0.00px;width:7.97px;height:8.20px;background:rgb(180,180,180)"></i><i style="left:15.33px;top:0.00px;width:7.97px;height:8.20px;background:rgb(176,176,176)"></i><i style="left:23.00px;top:0.00px;width:7.97px;height:8.20px;background:rgb(190,190,190)"></i><i style="left:30.67px;top:0.00px;width:7.97px;height:8.20px;background:rgb(180,180,180)"></i><i style="left:38.33px;top:0.00px;width:7.97px;height:8.20px;background:rgb(204,204,204)"></i><i style="left:46.00px;top:0.00px;width:7.97px;height:8.20px;background:rgb(176,176,176)"></i><i style="left:53.67px;top:0.00px;width:7.97px;height:8.20px;background:rgb(182,182,182)"></i><i style="left:61.33px;top:0.00px;width:7.97px;height:8.20px;background:rgb(236,236,236)"></i></div>
<div class="a" style="left:271.0px;top:169.2px;width:69.0px;height:3.8px"><i style="left:0.00px;top:0.00px;width:7.97px;height:4.10px;background:rgb(240,240,240)"></i><i style="left:7.67px;top:0.00px;width:7.97px;height:4.10px;background:rgb(234,234,234)"></i><i style="left:15.33px;top:0.00px;width:7.97px;height:4.10px;background:rgb(232,232,232)"></i><i style="left:23.00px;top:0.00px;width:7.97px;height:4.10px;background:rgb(238,238,238)"></i><i style="left:30.67px;top:0.00px;width:7.97px;height:4.10px;background:rgb(234,234,234)"></i><i style="left:38.33px;top:0.00px;width:7.97px;height:4.10px;background:rgb(240,240,240)"></i><i style="left:46.00px;top:0.00px;width:7.97px;height:4.10px;background:rgb(232,232,232)"></i><i style="left:53.67px;top:0.00px;width:7.97px;height:4.10px;background:rgb(234,234,234)"></i><i style="left:61.33px;top:0.00px;width:7.97px;height:4.10px;background:rgb(248,248,248)"></i></div>
<div class="a" style="left:319.4px;top:208.9px;width:113.2px;height:13.3px"><i style="left:0.00px;top:0.00px;width:8.39px;height:6.95px;background:rgb(234,234,234)"></i><i style="left:8.09px;top:0.00px;width:8.39px;height:6.95px;background:rgb(226,226,226)"></i><i style="left:16.17px;top:0.00px;width:8.39px;height:6.95px;background:rgb(224,224,224)"></i><i style="left:24.26px;top:0.00px;width:8.39px;height:6.95px;background:rgb(228,228,228)"></i><i style="left:32.34px;top:0.00px;width:8.39px;height:6.95px;background:rgb(226,226,226)"></i><i style="left:40.43px;top:0.00px;width:8.39px;height:6.95px;background:rgb(230,230,230)"></i><i style="left:48.51px;top:0.00px;width:8.39px;height:6.95px;background:rgb(226,226,226)"></i><i style="left:56.60px;top:0.00px;width:8.39px;height:6.95px;background:rgb(222,222,222)"></i><i style="left:64.69px;top:0.00px;width:8.39px;height:6.95px;background:rgb(222,222,222)"></i><i style="left:72.77px;top:0.00px;width:8.39px;height:6.95px;background:rgb(214,214,214)"></i><i style="left:80.86px;top:0.00px;width:8.39px;height:6.95px;background:rgb(206,206,206)"></i><i style="left:88.94px;top:0.00px;width:8.39px;height:6.95px;background:rgb(216,216,216)"></i><i style="left:97.03px;top:0.00px;width:8.39px;height:6.95px;background:rgb(210,210,210)"></i><i style="left:105.11px;top:0.00px;width:8.39px;height:6.95px;background:rgb(222,222,222)"></i><i style="left:0.00px;top:6.65px;width:8.39px;height:6.95px;background:rgb(236,236,236)"></i><i style="left:8.09px;top:6.65px;width:8.39px;height:6.95px;background:rgb(222,222,222)"></i><i style="left:16.17px;top:6.65px;width:8.39px;height:6.95px;background:rgb(220,220,220)"></i><i style="left:24.26px;top:6.65px;width:8.39px;height:6.95px;background:rgb(226,226,226)"></i><i style="left:32.34px;top:6.65px;width:8.39px;height:6.95px;background:rgb(222,222,222)"></i><i style="left:40.43px;top:6.65px;width:8.39px;height:6.95px;background:rgb(228,228,228)"></i><i style="left:48.51px;top:6.65px;width:8.39px;height:6.95px;background:rgb(222,222,222)"></i><i style="left:56.60px;top:6.65px;width:8.39px;height:6.95px;background:rgb(216,216,216)"></i><i style="left:64.69px;top:6.65px;width:8.39px;height:6.95px;background:rgb(212,212,212)"></i><i style="left:72.77px;top:6.65px;width:8.39px;height:6.95px;background:rgb(208,208,208)"></i><i style="left:80.86px;top:6.65px;width:8.39px;height:6.95px;background:rgb(196,196,196)"></i><i style="left:88.94px;top:6.65px;width:8.39px;height:6.95px;background:rgb(204,204,204)"></i><i style="left:97.03px;top:6.65px;width:8.39px;height:6.95px;background:rgb(214,214,214)"></i><i style="left:105.11px;top:6.65px;width:8.39px;height:6.95px;background:rgb(226,226,226)"></i></div>
<div class="a" style="left:480.6px;top:208.9px;width:76.2px;height:13.3px"><i style="left:0.00px;top:0.00px;width:7.92px;height:6.95px;background:rgb(246,246,246)"></i><i style="left:7.62px;top:0.00px;width:7.92px;height:6.95px;background:rgb(238,238,238)"></i><i style="left:15.24px;top:0.00px;width:7.92px;height:6.95px;background:rgb(230,230,230)"></i><i style="left:22.86px;top:0.00px;width:7.92px;height:6.95px;background:rgb(228,228,228)"></i><i style="left:30.48px;top:0.00px;width:7.92px;height:6.95px;background:rgb(224,224,224)"></i><i style="left:38.10px;top:0.00px;width:7.92px;height:6.95px;background:rgb(228,228,228)"></i><i style="left:45.72px;top:0.00px;width:7.92px;height:6.95px;background:rgb(230,230,230)"></i><i style="left:53.34px;top:0.00px;width:7.92px;height:6.95px;background:rgb(222,222,222)"></i><i style="left:60.96px;top:0.00px;width:7.92px;height:6.95px;background:rgb(220,220,220)"></i><i style="left:68.58px;top:0.00px;width:7.92px;height:6.95px;background:rgb(240,240,240)"></i><i style="left:0.00px;top:6.65px;width:7.92px;height:6.95px;background:rgb(246,246,246)"></i><i style="left:7.62px;top:6.65px;width:7.92px;height:6.95px;background:rgb(236,236,236)"></i><i style="left:15.24px;top:6.65px;width:7.92px;height:6.95px;background:rgb(228,228,228)"></i><i style="left:22.86px;top:6.65px;width:7.92px;height:6.95px;background:rgb(224,224,224)"></i><i style="left:30.48px;top:6.65px;width:7.92px;height:6.95px;background:rgb(226,226,226)"></i><i style="left:38.10px;top:6.65px;width:7.92px;height:6.95px;background:rgb(228,228,228)"></i><i style="left:45.72px;top:6.65px;width:7.92px;height:6.95px;background:rgb(226,226,226)"></i><i style="left:53.34px;top:6.65px;width:7.92px;height:6.95px;background:rgb(218,218,218)"></i><i style="left:60.96px;top:6.65px;width:7.92px;height:6.95px;background:rgb(216,216,216)"></i><i style="left:68.58px;top:6.65px;width:7.92px;height:6.95px;background:rgb(240,240,240)"></i></div>
</div>
<div class="a" style="left:591.100px;top:130.700px;width:6px;height:90px;background:#e1e1e1"></div>
<div class="a" style="left:515px;top:367px;width:70px;height:20px;border-radius:3px;background:#3d8adf;color:#fff;line-height:20px;padding-top:.8px;text-align:center;font-weight:bold">确定</div>
</div>
</body>
</html>
